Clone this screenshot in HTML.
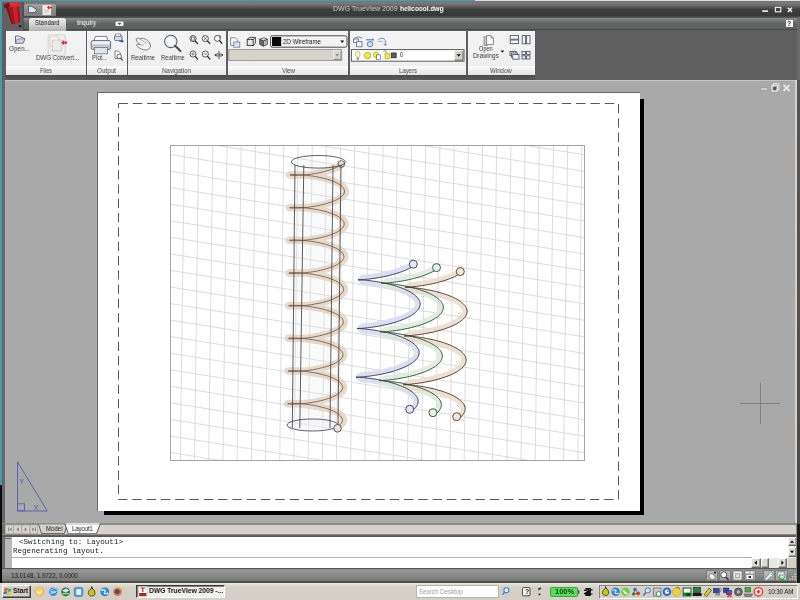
<!DOCTYPE html>
<html lang="en">
<head>
<meta charset="utf-8">
<title>DWG TrueView 2009 helicoool.dwg</title>
<style>
html,body{margin:0;padding:0;}
body{width:800px;height:600px;overflow:hidden;position:relative;background:#a9a9a9;font-family:"Liberation Sans",sans-serif;}
.abs,.b,.t{position:absolute;}
.b{box-sizing:border-box;}
.t{white-space:pre;transform-origin:0 50%;display:block;will-change:transform;}
.panel{top:30.5px;height:44.2px;background:linear-gradient(#f4f4f4,#f0f0f0 70%,#ededed);}
.ptitle{top:65px;height:9.7px;background:linear-gradient(#e0e0e0 0,#fcfcfc 1px,#f4f4f4 40%,#e3e3e3 100%);}
.raised{background:#d4d0c8;border:1px solid;border-color:#fff #404040 #404040 #fff;box-shadow:inset -1px -1px 0 #808080;}
.sunken{border:1px solid;border-color:#808080 #fff #fff #808080;}
.sb{background:#dedbd4;border:1px solid;border-color:#fbfbfb #6c6c6c #6c6c6c #fbfbfb;box-shadow:inset -1px -1px 0 #a4a4a0;}
.sti{top:570px;height:11px;background:linear-gradient(#bcbcbc,#a2a2a2);border:1px solid #7e7e7e;border-radius:1px;}
</style>
</head>
<body>
<!-- ======= drawing window ======= -->
<div class="b" id="mdi" style="left:2px;top:79.5px;width:795px;height:444.5px;background:#a9a9a9;border-top:1.8px solid #c4c4c4;"></div>
<div class="b" style="left:1.7px;top:79.5px;width:3.1px;height:444px;background:#69656d"></div>
<div class="b" style="left:795px;top:79.5px;width:1.5px;height:444px;background:#d2d2d2"></div>
<div class="b" style="left:796.5px;top:79.5px;width:3.5px;height:444px;background:linear-gradient(#555,#5a5048 50%,#4a4a4a)"></div>
<!-- paper -->
<div class="b" style="left:104px;top:99px;width:539.5px;height:415.5px;background:#000"></div>
<div class="b" id="paper" style="left:97px;top:92px;width:542.5px;height:418.5px;background:#fff;border-left:1px solid #6a6a6a;border-top:1px solid #6a6a6a"></div>
<svg class="abs" style="left:0;top:0" width="800" height="600" viewBox="0 0 800 600">
<clipPath id="vp"><rect x="170.5" y="145.5" width="414.0" height="315.0"/></clipPath>
<g clip-path="url(#vp)" stroke="#d8d8da" stroke-width="0.9" fill="none">
<line x1="170.5" y1="71.8" x2="584.5" y2="138.3"/>
<line x1="170.5" y1="88.4" x2="584.5" y2="154.8"/>
<line x1="170.5" y1="104.9" x2="584.5" y2="171.4"/>
<line x1="170.5" y1="121.5" x2="584.5" y2="187.9"/>
<line x1="170.5" y1="138.0" x2="584.5" y2="204.5"/>
<line x1="170.5" y1="154.6" x2="584.5" y2="221.0"/>
<line x1="170.5" y1="171.2" x2="584.5" y2="237.6"/>
<line x1="170.5" y1="187.7" x2="584.5" y2="254.1"/>
<line x1="170.5" y1="204.2" x2="584.5" y2="270.7"/>
<line x1="170.5" y1="220.8" x2="584.5" y2="287.2"/>
<line x1="170.5" y1="237.3" x2="584.5" y2="303.8"/>
<line x1="170.5" y1="253.9" x2="584.5" y2="320.3"/>
<line x1="170.5" y1="270.4" x2="584.5" y2="336.9"/>
<line x1="170.5" y1="287.0" x2="584.5" y2="353.4"/>
<line x1="170.5" y1="303.6" x2="584.5" y2="370.0"/>
<line x1="170.5" y1="320.1" x2="584.5" y2="386.5"/>
<line x1="170.5" y1="336.6" x2="584.5" y2="403.1"/>
<line x1="170.5" y1="353.2" x2="584.5" y2="419.6"/>
<line x1="170.5" y1="369.8" x2="584.5" y2="436.2"/>
<line x1="170.5" y1="386.3" x2="584.5" y2="452.7"/>
<line x1="170.5" y1="402.9" x2="584.5" y2="469.3"/>
<line x1="170.5" y1="419.4" x2="584.5" y2="485.8"/>
<line x1="170.5" y1="436.0" x2="584.5" y2="502.4"/>
<line x1="170.5" y1="452.5" x2="584.5" y2="518.9"/>
<line x1="170.5" y1="469.0" x2="584.5" y2="535.5"/>
<line x1="184.4" y1="145.5" x2="180.3" y2="460.5"/>
<line x1="198.6" y1="145.5" x2="194.5" y2="460.5"/>
<line x1="212.8" y1="145.5" x2="208.7" y2="460.5"/>
<line x1="227.0" y1="145.5" x2="222.9" y2="460.5"/>
<line x1="241.2" y1="145.5" x2="237.1" y2="460.5"/>
<line x1="255.4" y1="145.5" x2="251.3" y2="460.5"/>
<line x1="269.6" y1="145.5" x2="265.5" y2="460.5"/>
<line x1="283.8" y1="145.5" x2="279.7" y2="460.5"/>
<line x1="298.0" y1="145.5" x2="293.9" y2="460.5"/>
<line x1="312.2" y1="145.5" x2="308.1" y2="460.5"/>
<line x1="326.3" y1="145.5" x2="322.3" y2="460.5"/>
<line x1="340.5" y1="145.5" x2="336.4" y2="460.5"/>
<line x1="354.7" y1="145.5" x2="350.6" y2="460.5"/>
<line x1="368.9" y1="145.5" x2="364.8" y2="460.5"/>
<line x1="383.1" y1="145.5" x2="379.0" y2="460.5"/>
<line x1="397.3" y1="145.5" x2="393.2" y2="460.5"/>
<line x1="411.5" y1="145.5" x2="407.4" y2="460.5"/>
<line x1="425.7" y1="145.5" x2="421.6" y2="460.5"/>
<line x1="439.9" y1="145.5" x2="435.8" y2="460.5"/>
<line x1="454.1" y1="145.5" x2="450.0" y2="460.5"/>
<line x1="468.3" y1="145.5" x2="464.2" y2="460.5"/>
<line x1="482.5" y1="145.5" x2="478.4" y2="460.5"/>
<line x1="496.7" y1="145.5" x2="492.6" y2="460.5"/>
<line x1="510.9" y1="145.5" x2="506.8" y2="460.5"/>
<line x1="525.1" y1="145.5" x2="521.0" y2="460.5"/>
<line x1="539.3" y1="145.5" x2="535.2" y2="460.5"/>
<line x1="553.5" y1="145.5" x2="549.4" y2="460.5"/>
<line x1="567.7" y1="145.5" x2="563.6" y2="460.5"/>
<line x1="581.9" y1="145.5" x2="577.8" y2="460.5"/>
<line x1="596.1" y1="145.5" x2="592.0" y2="460.5"/>
</g>
<rect x="170.5" y="145.5" width="414.0" height="315.0" fill="none" stroke="#a4a4a4" stroke-width="1"/>
<polygon points="292,162 345,162 342,425 288,425" fill="#e6e8ee" opacity="0.22"/>
<path d="M340.5,165.6 L338.8,166.6 L336.9,167.5 L334.8,168.4 L332.5,169.3 L330.1,170.1 L327.6,170.8 L325.0,171.5 L322.3,172.2 L319.6,172.7 L316.9,173.3 L314.2,173.7 L311.5,174.1 L308.8,174.5 L306.3,174.7 L303.9,175.0 L301.5,175.2 L299.4,175.3 L297.4,175.4 L295.6,175.4 L294.0,175.4 L292.6,175.4 L291.5,175.4 L290.6,175.3 L289.9,175.2 L289.5,175.1 L289.4,175.0 L289.5,174.9 L289.9,174.8 L290.6,174.7 L291.5,174.6 L292.7,174.6 L294.1,174.6 L295.7,174.6 L297.5,174.6 L299.5,174.7 L301.7,174.9 L304.0,175.0 L306.5,175.3 L309.0,175.6 L311.6,175.9 L314.3,176.3 L317.0,176.8 L319.8,177.3 L322.5,177.9 L325.1,178.5 L327.7,179.2 L330.2,180.0 L332.6,180.8 L334.8,181.6 L336.9,182.5 L338.7,183.5 L340.4,184.4 L341.9,185.4 L343.1,186.5 L344.1,187.6 L344.9,188.7 L345.4,189.8 L345.6,190.9 L345.6,192.0 L345.3,193.1 L344.7,194.2 L343.9,195.3 L342.9,196.3 L341.6,197.4 L340.1,198.4 L338.3,199.4 L336.4,200.3 L334.3,201.2 L332.0,202.0 L329.6,202.8 L327.1,203.6 L324.5,204.3 L321.8,204.9 L319.1,205.5 L316.4,206.0 L313.6,206.4 L311.0,206.8 L308.3,207.2 L305.8,207.4 L303.3,207.7 L301.0,207.9 L298.9,208.0 L296.9,208.1 L295.1,208.1 L293.5,208.1 L292.2,208.1 L291.1,208.0 L290.2,208.0 L289.6,207.9 L289.2,207.8 L289.1,207.7 L289.3,207.6 L289.7,207.5 L290.4,207.4 L291.3,207.3 L292.5,207.3 L293.9,207.2 L295.5,207.3 L297.4,207.3 L299.4,207.4 L301.6,207.5 L303.9,207.7 L306.3,208.0 L308.9,208.3 L311.5,208.6 L314.2,209.0 L317.0,209.5 L319.7,210.0 L322.4,210.6 L325.0,211.2 L327.6,211.9 L330.1,212.7 L332.4,213.5 L334.7,214.4 L336.7,215.3 L338.6,216.2 L340.2,217.2 L341.7,218.2 L342.9,219.3 L343.9,220.3 L344.6,221.4 L345.1,222.5 L345.3,223.6 L345.3,224.7 L345.0,225.9 L344.4,227.0 L343.6,228.0 L342.5,229.1 L341.2,230.1 L339.6,231.2 L337.9,232.1 L335.9,233.1 L333.8,233.9 L331.5,234.8 L329.1,235.6 L326.6,236.3 L324.0,237.0 L321.3,237.6 L318.6,238.2 L315.8,238.7 L313.1,239.1 L310.4,239.5 L307.8,239.9 L305.3,240.1 L302.8,240.4 L300.6,240.5 L298.4,240.7 L296.4,240.8 L294.7,240.8 L293.1,240.8 L291.8,240.8 L290.7,240.7 L289.8,240.6 L289.2,240.5 L288.9,240.4 L288.8,240.3 L289.0,240.2 L289.4,240.1 L290.1,240.1 L291.1,240.0 L292.3,239.9 L293.7,239.9 L295.3,239.9 L297.2,240.0 L299.2,240.1 L301.4,240.2 L303.8,240.4 L306.2,240.7 L308.8,241.0 L311.5,241.3 L314.1,241.7 L316.9,242.2 L319.6,242.7 L322.3,243.3 L324.9,244.0 L327.5,244.7 L330.0,245.4 L332.3,246.3 L334.5,247.1 L336.6,248.0 L338.4,249.0 L340.1,250.0 L341.5,251.0 L342.7,252.0 L343.7,253.1 L344.4,254.2 L344.8,255.3 L345.0,256.4 L344.9,257.5 L344.6,258.6 L344.0,259.7 L343.2,260.8 L342.1,261.9 L340.7,262.9 L339.2,263.9 L337.4,264.9 L335.4,265.8 L333.3,266.7 L331.0,267.5 L328.6,268.3 L326.1,269.1 L323.4,269.7 L320.8,270.4 L318.0,270.9 L315.3,271.4 L312.6,271.9 L309.9,272.2 L307.3,272.6 L304.8,272.8 L302.3,273.1 L300.1,273.2 L297.9,273.4 L296.0,273.4 L294.2,273.5 L292.7,273.5 L291.4,273.4 L290.3,273.4 L289.4,273.3 L288.9,273.2 L288.5,273.1 L288.5,273.0 L288.7,272.9 L289.2,272.8 L289.9,272.7 L290.9,272.7 L292.1,272.6 L293.5,272.6 L295.2,272.6 L297.0,272.7 L299.1,272.8 L301.3,272.9 L303.7,273.1 L306.1,273.4 L308.7,273.7 L311.4,274.0 L314.1,274.5 L316.8,274.9 L319.5,275.5 L322.2,276.1 L324.8,276.7 L327.4,277.4 L329.9,278.2 L332.2,279.0 L334.4,279.9 L336.4,280.8 L338.2,281.7 L339.9,282.7 L341.3,283.7 L342.5,284.8 L343.4,285.9 L344.1,287.0 L344.5,288.1 L344.7,289.2 L344.6,290.3 L344.3,291.4 L343.6,292.5 L342.8,293.6 L341.7,294.6 L340.3,295.7 L338.7,296.7 L336.9,297.6 L335.0,298.6 L332.8,299.4 L330.5,300.3 L328.1,301.1 L325.5,301.8 L322.9,302.5 L320.2,303.1 L317.5,303.6 L314.8,304.1 L312.1,304.6 L309.4,305.0 L306.8,305.3 L304.2,305.5 L301.8,305.8 L299.6,305.9 L297.5,306.0 L295.5,306.1 L293.8,306.2 L292.3,306.2 L291.0,306.1 L289.9,306.1 L289.1,306.0 L288.5,305.9 L288.2,305.8 L288.2,305.7 L288.4,305.6 L288.9,305.5 L289.6,305.4 L290.6,305.3 L291.9,305.3 L293.3,305.3 L295.0,305.3 L296.9,305.4 L299.0,305.5 L301.2,305.6 L303.5,305.8 L306.0,306.1 L308.6,306.4 L311.3,306.8 L314.0,307.2 L316.7,307.7 L319.4,308.2 L322.1,308.8 L324.7,309.5 L327.3,310.2 L329.7,310.9 L332.1,311.8 L334.2,312.6 L336.2,313.5 L338.1,314.5 L339.7,315.5 L341.1,316.5 L342.3,317.6 L343.2,318.6 L343.8,319.7 L344.3,320.8 L344.4,321.9 L344.3,323.1 L343.9,324.2 L343.3,325.3 L342.4,326.3 L341.2,327.4 L339.9,328.4 L338.3,329.4 L336.5,330.4 L334.5,331.3 L332.3,332.2 L330.0,333.0 L327.6,333.8 L325.0,334.5 L322.4,335.2 L319.7,335.8 L317.0,336.4 L314.2,336.9 L311.5,337.3 L308.9,337.7 L306.2,338.0 L303.7,338.2 L301.3,338.5 L299.1,338.6 L297.0,338.7 L295.1,338.8 L293.3,338.8 L291.8,338.8 L290.5,338.8 L289.5,338.7 L288.7,338.7 L288.2,338.6 L287.9,338.5 L287.9,338.4 L288.1,338.2 L288.6,338.2 L289.4,338.1 L290.4,338.0 L291.7,338.0 L293.2,338.0 L294.8,338.0 L296.7,338.1 L298.8,338.2 L301.1,338.3 L303.4,338.5 L305.9,338.8 L308.5,339.1 L311.2,339.5 L313.9,339.9 L316.6,340.4 L319.3,340.9 L322.0,341.5 L324.6,342.2 L327.2,342.9 L329.6,343.7 L331.9,344.5 L334.1,345.4 L336.1,346.3 L337.9,347.2 L339.5,348.2 L340.9,349.3 L342.0,350.3 L342.9,351.4 L343.6,352.5 L344.0,353.6 L344.1,354.7 L344.0,355.8 L343.6,356.9 L342.9,358.0 L342.0,359.1 L340.8,360.2 L339.4,361.2 L337.8,362.2 L336.0,363.2 L334.0,364.1 L331.8,364.9 L329.5,365.8 L327.1,366.5 L324.5,367.3 L321.9,367.9 L319.2,368.5 L316.4,369.1 L313.7,369.6 L311.0,370.0 L308.3,370.4 L305.7,370.7 L303.2,370.9 L300.8,371.2 L298.6,371.3 L296.5,371.4 L294.6,371.5 L292.9,371.5 L291.4,371.5 L290.1,371.5 L289.1,371.4 L288.3,371.3 L287.8,371.2 L287.6,371.1 L287.6,371.0 L287.8,370.9 L288.4,370.8 L289.2,370.7 L290.2,370.7 L291.5,370.7 L293.0,370.6 L294.7,370.7 L296.6,370.7 L298.7,370.9 L300.9,371.0 L303.3,371.2 L305.8,371.5 L308.4,371.8 L311.1,372.2 L313.8,372.6 L316.5,373.1 L319.2,373.6 L321.9,374.3 L324.5,374.9 L327.1,375.6 L329.5,376.4 L331.8,377.2 L334.0,378.1 L335.9,379.0 L337.7,380.0 L339.3,381.0 L340.7,382.0 L341.8,383.1 L342.7,384.2 L343.3,385.3 L343.7,386.4 L343.8,387.5 L343.6,388.6 L343.2,389.7 L342.5,390.8 L341.6,391.9 L340.4,392.9 L339.0,394.0 L337.4,395.0 L335.5,395.9 L333.5,396.8 L331.3,397.7 L329.0,398.5 L326.5,399.3 L324.0,400.0 L321.3,400.7 L318.6,401.3 L315.9,401.8 L313.2,402.3 L310.5,402.7 L307.8,403.1 L305.2,403.4 L302.7,403.6 L300.3,403.8 L298.1,404.0 L296.0,404.1 L294.2,404.2 L292.5,404.2 L291.0,404.2 L289.7,404.1 L288.7,404.1 L288.0,404.0 L287.5,403.9 L287.2,403.8 L287.3,403.7 L287.6,403.6 L288.1,403.5 L288.9,403.4 L290.0,403.4 L291.3,403.3 L292.8,403.3 L294.5,403.4 L296.4,403.4 L298.6,403.5 L300.8,403.7 L303.2,403.9 L305.7,404.2 L308.3,404.5 L311.0,404.9 L313.7,405.3 L316.4,405.8 L319.1,406.4 L321.8,407.0 L324.4,407.7 L327.0,408.4 L329.4,409.2 L331.7,410.0 L333.8,410.9 L335.8,411.8 L337.6,412.8 L339.1,413.8 L340.5,414.8 L341.6,415.9 L342.4,416.9 L343.0,418.0 L343.4,419.1 L343.5,420.3 L343.3,421.4 L342.8,422.5 L342.1,423.6 L341.2,424.6 L340.0,425.7 L338.6,426.7 L336.9,427.7" fill="none" stroke="#e3d5c6" stroke-width="7" stroke-linecap="round" stroke-linejoin="round" opacity="0.88"/>
<path d="M339.5,165.6 L337.9,166.6 L336.0,167.5 L334.0,168.4 L331.8,169.3 L329.4,170.1 L327.0,170.8 L324.5,171.5 L321.9,172.2 L319.2,172.7 L316.6,173.3 L313.9,173.7 L311.3,174.1 L308.7,174.5 L306.2,174.7 L303.9,175.0 L301.6,175.2 L299.5,175.3 L297.6,175.4 L295.8,175.4 L294.2,175.4 L292.9,175.4 L291.8,175.4 L290.9,175.3 L290.3,175.2 L289.9,175.1 L289.8,175.0 L289.9,174.9 L290.3,174.8 L291.0,174.7 L291.9,174.6 L293.0,174.6 L294.4,174.6 L295.9,174.6 L297.7,174.6 L299.6,174.7 L301.8,174.9 L304.0,175.0 L306.4,175.3 L308.9,175.6 L311.4,175.9 L314.1,176.3 L316.7,176.8 L319.4,177.3 L322.0,177.9 L324.6,178.5 L327.1,179.2 L329.5,180.0 L331.8,180.8 L334.0,181.6 L336.0,182.5 L337.8,183.5 L339.5,184.4 L340.9,185.4 L342.1,186.5 L343.1,187.6 L343.8,188.7 L344.3,189.8 L344.5,190.9 L344.5,192.0 L344.2,193.1 L343.7,194.2 L342.9,195.3 L341.9,196.3 L340.6,197.4 L339.1,198.4 L337.4,199.4 L335.5,200.3 L333.5,201.2 L331.3,202.0 L328.9,202.8 L326.5,203.6 L324.0,204.3 L321.3,204.9 L318.7,205.5 L316.0,206.0 L313.4,206.4 L310.8,206.8 L308.2,207.2 L305.7,207.4 L303.4,207.7 L301.1,207.9 L299.0,208.0 L297.1,208.1 L295.4,208.1 L293.8,208.1 L292.5,208.1 L291.4,208.0 L290.6,208.0 L289.9,207.9 L289.6,207.8 L289.5,207.7 L289.6,207.6 L290.1,207.5 L290.7,207.4 L291.6,207.3 L292.8,207.3 L294.2,207.2 L295.7,207.3 L297.5,207.3 L299.5,207.4 L301.6,207.5 L303.9,207.7 L306.3,208.0 L308.8,208.3 L311.3,208.6 L314.0,209.0 L316.6,209.5 L319.3,210.0 L321.9,210.6 L324.5,211.2 L327.0,211.9 L329.4,212.7 L331.7,213.5 L333.8,214.4 L335.8,215.3 L337.7,216.2 L339.3,217.2 L340.7,218.2 L341.9,219.3 L342.8,220.3 L343.6,221.4 L344.0,222.5 L344.2,223.6 L344.2,224.7 L343.9,225.9 L343.3,227.0 L342.5,228.0 L341.4,229.1 L340.2,230.1 L338.7,231.2 L337.0,232.1 L335.1,233.1 L333.0,233.9 L330.8,234.8 L328.4,235.6 L326.0,236.3 L323.4,237.0 L320.8,237.6 L318.2,238.2 L315.5,238.7 L312.9,239.1 L310.3,239.5 L307.7,239.9 L305.2,240.1 L302.9,240.4 L300.6,240.5 L298.6,240.7 L296.6,240.8 L294.9,240.8 L293.4,240.8 L292.1,240.8 L291.0,240.7 L290.2,240.6 L289.6,240.5 L289.3,240.4 L289.2,240.3 L289.4,240.2 L289.8,240.1 L290.5,240.1 L291.4,240.0 L292.6,239.9 L294.0,239.9 L295.6,239.9 L297.4,240.0 L299.4,240.1 L301.5,240.2 L303.8,240.4 L306.2,240.7 L308.7,241.0 L311.2,241.3 L313.9,241.7 L316.5,242.2 L319.2,242.7 L321.8,243.3 L324.4,244.0 L326.9,244.7 L329.3,245.4 L331.6,246.3 L333.7,247.1 L335.7,248.0 L337.5,249.0 L339.1,250.0 L340.5,251.0 L341.7,252.0 L342.6,253.1 L343.3,254.2 L343.7,255.3 L343.9,256.4 L343.8,257.5 L343.5,258.6 L342.9,259.7 L342.1,260.8 L341.0,261.9 L339.7,262.9 L338.2,263.9 L336.5,264.9 L334.6,265.8 L332.5,266.7 L330.3,267.5 L327.9,268.3 L325.5,269.1 L322.9,269.7 L320.3,270.4 L317.7,270.9 L315.0,271.4 L312.3,271.9 L309.7,272.2 L307.2,272.6 L304.7,272.8 L302.4,273.1 L300.2,273.2 L298.1,273.4 L296.2,273.4 L294.5,273.5 L293.0,273.5 L291.7,273.4 L290.6,273.4 L289.8,273.3 L289.2,273.2 L288.9,273.1 L288.9,273.0 L289.1,272.9 L289.5,272.8 L290.2,272.7 L291.2,272.7 L292.4,272.6 L293.8,272.6 L295.4,272.6 L297.2,272.7 L299.2,272.8 L301.4,272.9 L303.7,273.1 L306.1,273.4 L308.6,273.7 L311.1,274.0 L313.8,274.5 L316.4,274.9 L319.1,275.5 L321.7,276.1 L324.3,276.7 L326.8,277.4 L329.1,278.2 L331.4,279.0 L333.6,279.9 L335.5,280.8 L337.3,281.7 L338.9,282.7 L340.3,283.7 L341.4,284.8 L342.4,285.9 L343.0,287.0 L343.4,288.1 L343.6,289.2 L343.5,290.3 L343.2,291.4 L342.6,292.5 L341.7,293.6 L340.6,294.6 L339.3,295.7 L337.8,296.7 L336.0,297.6 L334.1,298.6 L332.0,299.4 L329.8,300.3 L327.4,301.1 L324.9,301.8 L322.4,302.5 L319.8,303.1 L317.1,303.6 L314.5,304.1 L311.8,304.6 L309.2,305.0 L306.7,305.3 L304.2,305.5 L301.9,305.8 L299.7,305.9 L297.6,306.0 L295.7,306.1 L294.0,306.2 L292.5,306.2 L291.3,306.1 L290.2,306.1 L289.4,306.0 L288.9,305.9 L288.6,305.8 L288.6,305.7 L288.8,305.6 L289.3,305.5 L290.0,305.4 L291.0,305.3 L292.2,305.3 L293.6,305.3 L295.2,305.3 L297.1,305.4 L299.1,305.5 L301.2,305.6 L303.5,305.8 L306.0,306.1 L308.5,306.4 L311.1,306.8 L313.7,307.2 L316.3,307.7 L319.0,308.2 L321.6,308.8 L324.2,309.5 L326.6,310.2 L329.0,310.9 L331.3,311.8 L333.4,312.6 L335.4,313.5 L337.1,314.5 L338.7,315.5 L340.1,316.5 L341.2,317.6 L342.1,318.6 L342.8,319.7 L343.2,320.8 L343.3,321.9 L343.2,323.1 L342.8,324.2 L342.2,325.3 L341.3,326.3 L340.2,327.4 L338.9,328.4 L337.3,329.4 L335.6,330.4 L333.7,331.3 L331.5,332.2 L329.3,333.0 L326.9,333.8 L324.4,334.5 L321.9,335.2 L319.3,335.8 L316.6,336.4 L313.9,336.9 L311.3,337.3 L308.7,337.7 L306.2,338.0 L303.7,338.2 L301.4,338.5 L299.2,338.6 L297.1,338.7 L295.3,338.8 L293.6,338.8 L292.1,338.8 L290.9,338.8 L289.9,338.7 L289.1,338.7 L288.6,338.6 L288.3,338.5 L288.3,338.4 L288.5,338.2 L289.0,338.2 L289.8,338.1 L290.7,338.0 L292.0,338.0 L293.4,338.0 L295.1,338.0 L296.9,338.1 L298.9,338.2 L301.1,338.3 L303.4,338.5 L305.8,338.8 L308.4,339.1 L311.0,339.5 L313.6,339.9 L316.2,340.4 L318.9,340.9 L321.5,341.5 L324.0,342.2 L326.5,342.9 L328.9,343.7 L331.2,344.5 L333.3,345.4 L335.2,346.3 L337.0,347.2 L338.5,348.2 L339.9,349.3 L341.0,350.3 L341.9,351.4 L342.5,352.5 L342.9,353.6 L343.0,354.7 L342.9,355.8 L342.5,356.9 L341.8,358.0 L340.9,359.1 L339.8,360.2 L338.5,361.2 L336.9,362.2 L335.1,363.2 L333.2,364.1 L331.1,364.9 L328.8,365.8 L326.4,366.5 L323.9,367.3 L321.4,367.9 L318.7,368.5 L316.1,369.1 L313.4,369.6 L310.8,370.0 L308.2,370.4 L305.6,370.7 L303.2,370.9 L300.9,371.2 L298.7,371.3 L296.7,371.4 L294.8,371.5 L293.2,371.5 L291.7,371.5 L290.5,371.5 L289.5,371.4 L288.7,371.3 L288.2,371.2 L288.0,371.1 L288.0,371.0 L288.2,370.9 L288.8,370.8 L289.5,370.7 L290.5,370.7 L291.8,370.7 L293.2,370.6 L294.9,370.7 L296.8,370.7 L298.8,370.9 L301.0,371.0 L303.3,371.2 L305.7,371.5 L308.3,371.8 L310.9,372.2 L313.5,372.6 L316.1,373.1 L318.8,373.6 L321.4,374.3 L323.9,374.9 L326.4,375.6 L328.8,376.4 L331.0,377.2 L333.1,378.1 L335.0,379.0 L336.8,380.0 L338.3,381.0 L339.7,382.0 L340.8,383.1 L341.6,384.2 L342.2,385.3 L342.6,386.4 L342.7,387.5 L342.5,388.6 L342.1,389.7 L341.5,390.8 L340.5,391.9 L339.4,392.9 L338.0,394.0 L336.4,395.0 L334.7,395.9 L332.7,396.8 L330.6,397.7 L328.3,398.5 L325.9,399.3 L323.4,400.0 L320.8,400.7 L318.2,401.3 L315.5,401.8 L312.9,402.3 L310.2,402.7 L307.7,403.1 L305.1,403.4 L302.7,403.6 L300.4,403.8 L298.2,404.0 L296.2,404.1 L294.4,404.2 L292.7,404.2 L291.3,404.2 L290.1,404.1 L289.1,404.1 L288.4,404.0 L287.9,403.9 L287.6,403.8 L287.7,403.7 L288.0,403.6 L288.5,403.5 L289.3,403.4 L290.3,403.4 L291.6,403.3 L293.0,403.3 L294.7,403.4 L296.6,403.4 L298.7,403.5 L300.9,403.7 L303.2,403.9 L305.6,404.2 L308.2,404.5 L310.8,404.9 L313.4,405.3 L316.0,405.8 L318.7,406.4 L321.3,407.0 L323.8,407.7 L326.3,408.4 L328.7,409.2 L330.9,410.0 L333.0,410.9 L334.9,411.8 L336.6,412.8 L338.1,413.8 L339.4,414.8 L340.5,415.9 L341.4,416.9 L341.9,418.0 L342.3,419.1 L342.4,420.3 L342.2,421.4 L341.8,422.5 L341.1,423.6 L340.2,424.6 L339.0,425.7 L337.6,426.7 L336.0,427.7" fill="none" stroke="#604e3e" stroke-width="0.85" opacity="0.9"/>
<g fill="none" stroke="#484242" stroke-width="0.85">
<ellipse cx="318.3" cy="161.8" rx="27" ry="6.3"/>
<ellipse cx="312.5" cy="425" rx="25.5" ry="6" fill="#eef0f6" fill-opacity="0.5"/>
<line x1="295" y1="165" x2="292.3" y2="428"/>
<line x1="303.8" y1="165" x2="299.8" y2="428"/>
<line x1="333" y1="165" x2="330" y2="428"/>
<line x1="341" y1="165" x2="338" y2="428"/>
<circle cx="341.3" cy="164" r="3.3"/>
<circle cx="337.5" cy="428.3" r="3.8" fill="#e8e4e0"/>
</g>
<path d="M412.7,266.4 L411.1,267.4 L409.4,268.3 L407.6,269.2 L405.6,270.1 L403.6,270.9 L401.6,271.7 L399.4,272.5 L397.2,273.2 L395.0,273.9 L392.7,274.5 L390.5,275.1 L388.2,275.7 L385.9,276.2 L383.7,276.7 L381.4,277.1 L379.3,277.5 L377.1,277.9 L375.1,278.2 L373.1,278.5 L371.2,278.7 L369.4,279.0 L367.7,279.1 L366.1,279.3 L364.6,279.4 L363.3,279.5 L362.1,279.6 L361.0,279.7 L360.1,279.7 L359.4,279.8 L358.8,279.8 L358.4,279.8 L358.1,279.8 L358.0,279.8 L358.1,279.8 L358.3,279.8 L358.7,279.8 L359.2,279.8 L359.9,279.9 L360.8,279.9 L361.8,280.0 L363.0,280.0 L364.3,280.1 L365.7,280.3 L367.2,280.4 L368.9,280.6 L370.7,280.8 L372.5,281.1 L374.5,281.3 L376.5,281.6 L378.6,282.0 L380.8,282.4 L383.0,282.8 L385.2,283.3 L387.5,283.8 L389.7,284.4 L392.0,284.9 L394.2,285.6 L396.4,286.3 L398.6,287.0 L400.7,287.7 L402.8,288.5 L404.8,289.3 L406.7,290.2 L408.5,291.1 L410.2,292.0 L411.8,293.0 L413.3,294.0 L414.6,295.0 L415.8,296.0 L416.9,297.1 L417.8,298.1 L418.6,299.2 L419.2,300.3 L419.7,301.4 L420.0,302.6 L420.1,303.7 L420.1,304.8 L419.9,305.9 L419.5,307.0 L419.0,308.2 L418.3,309.3 L417.5,310.3 L416.5,311.4 L415.3,312.5 L414.1,313.5 L412.6,314.5 L411.1,315.5 L409.5,316.4 L407.7,317.4 L405.8,318.2 L403.9,319.1 L401.8,319.9 L399.7,320.7 L397.6,321.5 L395.4,322.2 L393.1,322.8 L390.9,323.5 L388.6,324.0 L386.3,324.6 L384.0,325.1 L381.8,325.5 L379.6,326.0 L377.4,326.4 L375.3,326.7 L373.3,327.0 L371.3,327.3 L369.5,327.5 L367.7,327.7 L366.0,327.9 L364.5,328.1 L363.1,328.2 L361.8,328.3 L360.7,328.4 L359.7,328.4 L358.8,328.4 L358.2,328.5 L357.6,328.5 L357.3,328.5 L357.1,328.5 L357.0,328.5 L357.2,328.5 L357.5,328.5 L357.9,328.5 L358.5,328.5 L359.3,328.6 L360.2,328.6 L361.3,328.7 L362.5,328.8 L363.9,328.9 L365.3,329.0 L366.9,329.2 L368.6,329.4 L370.5,329.6 L372.4,329.9 L374.3,330.2 L376.4,330.5 L378.5,330.9 L380.7,331.3 L382.9,331.7 L385.2,332.2 L387.4,332.7 L389.7,333.3 L391.9,333.9 L394.2,334.5 L396.4,335.2 L398.5,336.0 L400.6,336.7 L402.6,337.5 L404.6,338.4 L406.5,339.3 L408.2,340.2 L409.9,341.1 L411.4,342.1 L412.9,343.1 L414.2,344.1 L415.3,345.1 L416.3,346.2 L417.2,347.3 L417.9,348.4 L418.5,349.5 L418.9,350.6 L419.1,351.7 L419.1,352.8 L419.0,354.0 L418.8,355.1 L418.3,356.2 L417.8,357.3 L417.0,358.4 L416.1,359.5 L415.0,360.5 L413.9,361.6 L412.5,362.6 L411.1,363.6 L409.5,364.6 L407.8,365.5 L406.0,366.4 L404.1,367.3 L402.1,368.1 L400.0,368.9 L397.9,369.7 L395.7,370.4 L393.5,371.1 L391.2,371.8 L389.0,372.4 L386.7,373.0 L384.4,373.5 L382.1,374.0 L379.9,374.4 L377.7,374.8 L375.6,375.2 L373.5,375.5 L371.5,375.8 L369.6,376.1 L367.7,376.3 L366.0,376.5 L364.4,376.7 L362.9,376.8 L361.6,376.9 L360.4,377.0 L359.3,377.1 L358.3,377.1 L357.6,377.2 L357.0,377.2 L356.5,377.2 L356.2,377.2 L356.1,377.2 L356.1,377.2 L356.3,377.2 L356.6,377.2 L357.2,377.2 L357.8,377.3 L358.7,377.3 L359.7,377.3 L360.8,377.4 L362.1,377.5 L363.5,377.6 L365.0,377.8 L366.6,378.0 L368.4,378.2 L370.2,378.4 L372.2,378.7 L374.2,379.0 L376.3,379.3 L378.4,379.7 L380.6,380.1 L382.8,380.6 L385.1,381.1 L387.4,381.6 L389.6,382.2 L391.9,382.9 L394.1,383.5 L396.3,384.2 L398.4,385.0 L400.5,385.8 L402.5,386.6 L404.4,387.4 L406.2,388.3 L407.9,389.2 L409.6,390.2 L411.1,391.2 L412.4,392.2 L413.7,393.2 L414.8,394.3 L415.7,395.3 L416.5,396.4 L417.2,397.5 L417.7,398.6 L418.0,399.7 L418.1,400.9 L418.1,402.0 L418.0,403.1 L417.6,404.2 L417.1,405.3 L416.5,406.4 L415.7,407.5 L414.7,408.6 L413.6,409.7 L412.4,410.7 L411.0,411.7 L409.5,412.7 L407.1,409.0 L408.5,408.1 L409.7,407.2 L410.7,406.4 L411.6,405.5 L412.3,404.7 L412.8,404.0 L413.2,403.3 L413.5,402.7 L413.7,402.2 L413.8,401.7 L413.8,401.2 L413.7,400.7 L413.5,400.1 L413.3,399.5 L412.9,398.8 L412.3,398.1 L411.6,397.3 L410.8,396.5 L409.7,395.6 L408.6,394.8 L407.3,393.9 L405.8,393.1 L404.2,392.2 L402.5,391.4 L400.7,390.6 L398.9,389.8 L396.9,389.1 L394.9,388.4 L392.8,387.7 L390.6,387.1 L388.5,386.5 L386.3,385.9 L384.1,385.4 L381.9,384.9 L379.8,384.5 L377.6,384.0 L375.5,383.7 L373.5,383.3 L371.5,383.0 L369.7,382.8 L367.8,382.5 L366.1,382.3 L364.5,382.2 L363.1,382.0 L361.7,381.9 L360.5,381.8 L359.4,381.2 L358.5,380.6 L357.7,380.0 L357.1,379.4 L356.6,378.8 L356.3,378.2 L356.1,377.6 L356.1,377.0 L356.2,376.4 L356.5,375.9 L356.9,375.3 L357.5,374.7 L358.2,374.0 L359.1,373.4 L360.1,372.8 L361.2,372.5 L362.6,372.4 L364.0,372.3 L365.6,372.1 L367.2,371.9 L369.0,371.7 L370.9,371.5 L372.8,371.2 L374.9,370.9 L376.9,370.5 L379.1,370.1 L381.2,369.7 L383.4,369.2 L385.6,368.7 L387.9,368.1 L390.0,367.5 L392.2,366.9 L394.4,366.3 L396.4,365.6 L398.5,364.8 L400.4,364.1 L402.3,363.3 L404.1,362.5 L405.7,361.6 L407.3,360.8 L408.7,359.9 L409.9,359.0 L411.1,358.2 L412.0,357.3 L412.8,356.5 L413.5,355.7 L414.0,355.0 L414.3,354.4 L414.6,353.8 L414.7,353.2 L414.7,352.8 L414.7,352.3 L414.6,351.8 L414.4,351.2 L414.1,350.6 L413.6,349.8 L413.0,349.1 L412.3,348.3 L411.3,347.5 L410.3,346.6 L409.0,345.7 L407.7,344.9 L406.2,344.0 L404.5,343.2 L402.8,342.4 L401.0,341.6 L399.0,340.8 L397.0,340.1 L395.0,339.4 L392.9,338.8 L390.7,338.1 L388.6,337.5 L386.4,337.0 L384.2,336.5 L382.0,336.0 L379.9,335.6 L377.7,335.2 L375.7,334.8 L373.7,334.5 L371.7,334.2 L369.9,334.0 L368.1,333.7 L366.5,333.6 L364.9,333.4 L363.5,333.3 L362.2,333.2 L361.0,332.9 L360.0,332.3 L359.1,331.6 L358.4,331.0 L357.9,330.4 L357.4,329.8 L357.2,329.2 L357.0,328.7 L357.1,328.1 L357.3,327.5 L357.6,326.9 L358.1,326.3 L358.7,325.7 L359.5,325.1 L360.4,324.5 L361.5,323.9 L362.7,323.8 L364.1,323.7 L365.6,323.5 L367.2,323.4 L368.9,323.2 L370.7,322.9 L372.6,322.7 L374.6,322.4 L376.7,322.0 L378.8,321.6 L380.9,321.2 L383.1,320.8 L385.3,320.3 L387.5,319.8 L389.7,319.2 L391.9,318.6 L394.1,318.0 L396.2,317.3 L398.3,316.6 L400.2,315.8 L402.2,315.0 L404.0,314.2 L405.7,313.4 L407.3,312.6 L408.8,311.7 L410.2,310.9 L411.4,310.0 L412.5,309.1 L413.4,308.3 L414.1,307.5 L414.7,306.7 L415.1,306.0 L415.4,305.4 L415.6,304.9 L415.7,304.3 L415.7,303.9 L415.7,303.4 L415.5,302.8 L415.3,302.2 L414.9,301.6 L414.4,300.8 L413.7,300.1 L412.9,299.3 L411.9,298.4 L410.7,297.6 L409.5,296.7 L408.0,295.8 L406.5,295.0 L404.8,294.2 L403.0,293.4 L401.2,292.6 L399.2,291.8 L397.2,291.1 L395.1,290.4 L393.0,289.8 L390.8,289.2 L388.6,288.6 L386.5,288.1 L384.3,287.6 L382.1,287.1 L380.0,286.7 L377.9,286.3 L375.8,286.0 L373.9,285.7 L371.9,285.4 L370.1,285.2 L368.4,285.0 L366.8,284.8 L365.3,284.6 L363.9,284.5 L362.6,284.4 L361.6,283.9 L360.6,283.3 L359.8,282.7 L359.1,282.1 L358.6,281.5 L358.3,280.9 L358.1,280.3 L358.0,279.7 L358.1,279.1 L358.3,278.6 L358.7,278.0 L359.3,277.4 L360.0,276.8 L360.8,276.1 L361.8,275.5 L363.0,275.2 L364.2,275.0 L365.7,274.9 L367.2,274.8 L368.9,274.6 L370.6,274.4 L372.5,274.1 L374.4,273.8 L376.4,273.5 L378.5,273.2 L380.6,272.8 L382.8,272.4 L385.0,271.9 L387.2,271.4 L389.4,270.8 L391.6,270.3 L393.8,269.6 L395.9,269.0 L398.0,268.3 L400.0,267.6 L402.0,266.8 L403.9,266.0 L405.7,265.2 L407.4,264.4 L408.9,263.5 L410.5,262.6 Z" fill="#d8daef" stroke="#d8daef" stroke-width="0.8" stroke-linejoin="round" opacity="0.85"/>
<path d="M435.9,269.8 L434.3,270.8 L432.6,271.7 L430.8,272.6 L428.8,273.5 L426.8,274.3 L424.8,275.1 L422.6,275.9 L420.4,276.6 L418.2,277.3 L415.9,277.9 L413.7,278.5 L411.4,279.1 L409.1,279.6 L406.9,280.1 L404.6,280.5 L402.5,280.9 L400.3,281.3 L398.3,281.6 L396.3,281.9 L394.4,282.1 L392.6,282.4 L390.9,282.5 L389.3,282.7 L387.8,282.8 L386.5,282.9 L385.3,283.0 L384.2,283.1 L383.3,283.1 L382.6,283.2 L382.0,283.2 L381.6,283.2 L381.3,283.2 L381.2,283.2 L381.3,283.2 L381.5,283.2 L381.9,283.2 L382.4,283.2 L383.1,283.3 L384.0,283.3 L385.0,283.4 L386.2,283.4 L387.5,283.5 L388.9,283.7 L390.4,283.8 L392.1,284.0 L393.9,284.2 L395.7,284.5 L397.7,284.7 L399.7,285.0 L401.8,285.4 L404.0,285.8 L406.2,286.2 L408.4,286.7 L410.7,287.2 L412.9,287.8 L415.2,288.3 L417.4,289.0 L419.6,289.7 L421.8,290.4 L423.9,291.1 L426.0,291.9 L428.0,292.7 L429.9,293.6 L431.7,294.5 L433.4,295.4 L435.0,296.4 L436.5,297.4 L437.8,298.4 L439.0,299.4 L440.1,300.5 L441.0,301.5 L441.8,302.6 L442.4,303.7 L442.9,304.8 L443.2,306.0 L443.3,307.1 L443.3,308.2 L443.1,309.3 L442.7,310.4 L442.2,311.6 L441.5,312.7 L440.7,313.7 L439.7,314.8 L438.5,315.9 L437.3,316.9 L435.8,317.9 L434.3,318.9 L432.7,319.8 L430.9,320.8 L429.0,321.6 L427.1,322.5 L425.0,323.3 L422.9,324.1 L420.8,324.9 L418.6,325.6 L416.3,326.2 L414.1,326.9 L411.8,327.4 L409.5,328.0 L407.2,328.5 L405.0,328.9 L402.8,329.4 L400.6,329.8 L398.5,330.1 L396.5,330.4 L394.5,330.7 L392.7,330.9 L390.9,331.1 L389.2,331.3 L387.7,331.5 L386.3,331.6 L385.0,331.7 L383.9,331.8 L382.9,331.8 L382.0,331.8 L381.4,331.9 L380.8,331.9 L380.5,331.9 L380.3,331.9 L380.2,331.9 L380.4,331.9 L380.7,331.9 L381.1,331.9 L381.7,331.9 L382.5,332.0 L383.4,332.0 L384.5,332.1 L385.7,332.2 L387.1,332.3 L388.5,332.4 L390.1,332.6 L391.8,332.8 L393.7,333.0 L395.6,333.3 L397.5,333.6 L399.6,333.9 L401.7,334.3 L403.9,334.7 L406.1,335.1 L408.4,335.6 L410.6,336.1 L412.9,336.7 L415.1,337.3 L417.4,337.9 L419.6,338.6 L421.7,339.4 L423.8,340.1 L425.8,340.9 L427.8,341.8 L429.7,342.7 L431.4,343.6 L433.1,344.5 L434.6,345.5 L436.1,346.5 L437.4,347.5 L438.5,348.5 L439.5,349.6 L440.4,350.7 L441.1,351.8 L441.7,352.9 L442.1,354.0 L442.3,355.1 L442.3,356.2 L442.2,357.4 L442.0,358.5 L441.5,359.6 L441.0,360.7 L440.2,361.8 L439.3,362.9 L438.2,363.9 L437.1,365.0 L435.7,366.0 L434.3,367.0 L432.7,368.0 L431.0,368.9 L429.2,369.8 L427.3,370.7 L425.3,371.5 L423.2,372.3 L421.1,373.1 L418.9,373.8 L416.7,374.5 L414.4,375.2 L412.2,375.8 L409.9,376.4 L407.6,376.9 L405.3,377.4 L403.1,377.8 L400.9,378.2 L398.8,378.6 L396.7,378.9 L394.7,379.2 L392.8,379.5 L390.9,379.7 L389.2,379.9 L387.6,380.1 L386.1,380.2 L384.8,380.3 L383.6,380.4 L382.5,380.5 L381.5,380.5 L380.8,380.6 L380.2,380.6 L379.7,380.6 L379.4,380.6 L379.3,380.6 L379.3,380.6 L379.5,380.6 L379.8,380.6 L380.4,380.6 L381.0,380.7 L381.9,380.7 L382.9,380.7 L384.0,380.8 L385.3,380.9 L386.7,381.0 L388.2,381.2 L389.8,381.4 L391.6,381.6 L393.4,381.8 L395.4,382.1 L397.4,382.4 L399.5,382.7 L401.6,383.1 L403.8,383.5 L406.0,384.0 L408.3,384.5 L410.6,385.0 L412.8,385.6 L415.1,386.3 L417.3,386.9 L419.5,387.6 L421.6,388.4 L423.7,389.2 L425.7,390.0 L427.6,390.8 L429.4,391.7 L431.1,392.6 L432.8,393.6 L434.3,394.6 L435.6,395.6 L436.9,396.6 L438.0,397.7 L438.9,398.7 L439.7,399.8 L440.4,400.9 L440.9,402.0 L441.2,403.1 L441.3,404.3 L441.3,405.4 L441.2,406.5 L440.8,407.6 L440.3,408.7 L439.7,409.8 L438.9,410.9 L437.9,412.0 L436.8,413.1 L435.6,414.1 L434.2,415.1 L432.7,416.1 L430.3,412.4 L431.7,411.5 L432.9,410.6 L433.9,409.8 L434.8,408.9 L435.5,408.1 L436.0,407.4 L436.4,406.7 L436.7,406.1 L436.9,405.6 L437.0,405.1 L437.0,404.6 L436.9,404.1 L436.7,403.5 L436.5,402.9 L436.1,402.2 L435.5,401.5 L434.8,400.7 L434.0,399.9 L432.9,399.0 L431.8,398.2 L430.5,397.3 L429.0,396.5 L427.4,395.6 L425.7,394.8 L423.9,394.0 L422.1,393.2 L420.1,392.5 L418.1,391.8 L416.0,391.1 L413.8,390.5 L411.7,389.9 L409.5,389.3 L407.3,388.8 L405.1,388.3 L403.0,387.9 L400.8,387.4 L398.7,387.1 L396.7,386.7 L394.7,386.4 L392.9,386.2 L391.0,385.9 L389.3,385.7 L387.7,385.6 L386.3,385.4 L384.9,385.3 L383.7,385.2 L382.6,384.6 L381.7,384.0 L380.9,383.4 L380.3,382.8 L379.8,382.2 L379.5,381.6 L379.3,381.0 L379.3,380.4 L379.4,379.8 L379.7,379.3 L380.1,378.7 L380.7,378.1 L381.4,377.4 L382.3,376.8 L383.3,376.2 L384.4,375.9 L385.8,375.8 L387.2,375.7 L388.8,375.5 L390.4,375.3 L392.2,375.1 L394.1,374.9 L396.0,374.6 L398.1,374.3 L400.1,373.9 L402.3,373.5 L404.4,373.1 L406.6,372.6 L408.8,372.1 L411.1,371.5 L413.2,370.9 L415.4,370.3 L417.6,369.7 L419.6,369.0 L421.7,368.2 L423.6,367.5 L425.5,366.7 L427.3,365.9 L428.9,365.0 L430.5,364.2 L431.9,363.3 L433.1,362.4 L434.3,361.6 L435.2,360.7 L436.0,359.9 L436.7,359.1 L437.2,358.4 L437.5,357.8 L437.8,357.2 L437.9,356.6 L437.9,356.2 L437.9,355.7 L437.8,355.2 L437.6,354.6 L437.3,354.0 L436.8,353.2 L436.2,352.5 L435.5,351.7 L434.5,350.9 L433.5,350.0 L432.2,349.1 L430.9,348.3 L429.4,347.4 L427.7,346.6 L426.0,345.8 L424.2,345.0 L422.2,344.2 L420.2,343.5 L418.2,342.8 L416.1,342.2 L413.9,341.5 L411.8,340.9 L409.6,340.4 L407.4,339.9 L405.2,339.4 L403.1,339.0 L400.9,338.6 L398.9,338.2 L396.9,337.9 L394.9,337.6 L393.1,337.4 L391.3,337.1 L389.7,337.0 L388.1,336.8 L386.7,336.7 L385.4,336.6 L384.2,336.3 L383.2,335.7 L382.3,335.0 L381.6,334.4 L381.1,333.8 L380.6,333.2 L380.4,332.6 L380.2,332.1 L380.3,331.5 L380.5,330.9 L380.8,330.3 L381.3,329.7 L381.9,329.1 L382.7,328.5 L383.6,327.9 L384.7,327.3 L385.9,327.2 L387.3,327.1 L388.8,326.9 L390.4,326.8 L392.1,326.6 L393.9,326.3 L395.8,326.1 L397.8,325.8 L399.9,325.4 L402.0,325.0 L404.1,324.6 L406.3,324.2 L408.5,323.7 L410.7,323.2 L412.9,322.6 L415.1,322.0 L417.3,321.4 L419.4,320.7 L421.5,320.0 L423.4,319.2 L425.4,318.4 L427.2,317.6 L428.9,316.8 L430.5,316.0 L432.0,315.1 L433.4,314.3 L434.6,313.4 L435.7,312.5 L436.6,311.7 L437.3,310.9 L437.9,310.1 L438.3,309.4 L438.6,308.8 L438.8,308.3 L438.9,307.7 L438.9,307.3 L438.9,306.8 L438.7,306.2 L438.5,305.6 L438.1,305.0 L437.6,304.2 L436.9,303.5 L436.1,302.7 L435.1,301.8 L433.9,301.0 L432.7,300.1 L431.2,299.2 L429.7,298.4 L428.0,297.6 L426.2,296.8 L424.4,296.0 L422.4,295.2 L420.4,294.5 L418.3,293.8 L416.2,293.2 L414.0,292.6 L411.8,292.0 L409.7,291.5 L407.5,291.0 L405.3,290.5 L403.2,290.1 L401.1,289.7 L399.0,289.4 L397.1,289.1 L395.1,288.8 L393.3,288.6 L391.6,288.4 L390.0,288.2 L388.5,288.0 L387.1,287.9 L385.8,287.8 L384.8,287.3 L383.8,286.7 L383.0,286.1 L382.3,285.5 L381.8,284.9 L381.5,284.3 L381.3,283.7 L381.2,283.1 L381.3,282.5 L381.5,282.0 L381.9,281.4 L382.5,280.8 L383.2,280.2 L384.0,279.5 L385.0,278.9 L386.2,278.6 L387.4,278.4 L388.9,278.3 L390.4,278.2 L392.1,278.0 L393.8,277.8 L395.7,277.5 L397.6,277.2 L399.6,276.9 L401.7,276.6 L403.8,276.2 L406.0,275.8 L408.2,275.3 L410.4,274.8 L412.6,274.2 L414.8,273.7 L417.0,273.0 L419.1,272.4 L421.2,271.7 L423.2,271.0 L425.2,270.2 L427.1,269.4 L428.9,268.6 L430.6,267.8 L432.1,266.9 L433.7,266.0 Z" fill="#dbebdb" stroke="#dbebdb" stroke-width="0.8" stroke-linejoin="round" opacity="0.85"/>
<path d="M459.7,273.8 L458.1,274.8 L456.4,275.7 L454.6,276.6 L452.6,277.5 L450.6,278.3 L448.6,279.1 L446.4,279.9 L444.2,280.6 L442.0,281.3 L439.7,281.9 L437.5,282.5 L435.2,283.1 L432.9,283.6 L430.7,284.1 L428.4,284.5 L426.3,284.9 L424.1,285.3 L422.1,285.6 L420.1,285.9 L418.2,286.1 L416.4,286.4 L414.7,286.5 L413.1,286.7 L411.6,286.8 L410.3,286.9 L409.1,287.0 L408.0,287.1 L407.1,287.1 L406.4,287.2 L405.8,287.2 L405.4,287.2 L405.1,287.2 L405.0,287.2 L405.1,287.2 L405.3,287.2 L405.7,287.2 L406.2,287.2 L406.9,287.3 L407.8,287.3 L408.8,287.4 L410.0,287.4 L411.3,287.5 L412.7,287.7 L414.2,287.8 L415.9,288.0 L417.7,288.2 L419.5,288.5 L421.5,288.7 L423.5,289.0 L425.6,289.4 L427.8,289.8 L430.0,290.2 L432.2,290.7 L434.5,291.2 L436.7,291.8 L439.0,292.3 L441.2,293.0 L443.4,293.7 L445.6,294.4 L447.7,295.1 L449.8,295.9 L451.8,296.7 L453.7,297.6 L455.5,298.5 L457.2,299.4 L458.8,300.4 L460.3,301.4 L461.6,302.4 L462.8,303.4 L463.9,304.5 L464.8,305.5 L465.6,306.6 L466.2,307.7 L466.7,308.8 L467.0,310.0 L467.1,311.1 L467.1,312.2 L466.9,313.3 L466.5,314.4 L466.0,315.6 L465.3,316.7 L464.5,317.7 L463.5,318.8 L462.3,319.9 L461.1,320.9 L459.6,321.9 L458.1,322.9 L456.5,323.8 L454.7,324.8 L452.8,325.6 L450.9,326.5 L448.8,327.3 L446.7,328.1 L444.6,328.9 L442.4,329.6 L440.1,330.2 L437.9,330.9 L435.6,331.4 L433.3,332.0 L431.0,332.5 L428.8,332.9 L426.6,333.4 L424.4,333.8 L422.3,334.1 L420.3,334.4 L418.3,334.7 L416.5,334.9 L414.7,335.1 L413.0,335.3 L411.5,335.5 L410.1,335.6 L408.8,335.7 L407.7,335.8 L406.7,335.8 L405.8,335.8 L405.2,335.9 L404.6,335.9 L404.3,335.9 L404.1,335.9 L404.0,335.9 L404.2,335.9 L404.5,335.9 L404.9,335.9 L405.5,335.9 L406.3,336.0 L407.2,336.0 L408.3,336.1 L409.5,336.2 L410.9,336.3 L412.3,336.4 L413.9,336.6 L415.6,336.8 L417.5,337.0 L419.4,337.3 L421.3,337.6 L423.4,337.9 L425.5,338.3 L427.7,338.7 L429.9,339.1 L432.2,339.6 L434.4,340.1 L436.7,340.7 L438.9,341.3 L441.2,341.9 L443.4,342.6 L445.5,343.4 L447.6,344.1 L449.6,344.9 L451.6,345.8 L453.5,346.7 L455.2,347.6 L456.9,348.5 L458.4,349.5 L459.9,350.5 L461.2,351.5 L462.3,352.5 L463.3,353.6 L464.2,354.7 L464.9,355.8 L465.5,356.9 L465.9,358.0 L466.1,359.1 L466.1,360.2 L466.0,361.4 L465.8,362.5 L465.3,363.6 L464.8,364.7 L464.0,365.8 L463.1,366.9 L462.0,367.9 L460.9,369.0 L459.5,370.0 L458.1,371.0 L456.5,372.0 L454.8,372.9 L453.0,373.8 L451.1,374.7 L449.1,375.5 L447.0,376.3 L444.9,377.1 L442.7,377.8 L440.5,378.5 L438.2,379.2 L436.0,379.8 L433.7,380.4 L431.4,380.9 L429.1,381.4 L426.9,381.8 L424.7,382.2 L422.6,382.6 L420.5,382.9 L418.5,383.2 L416.6,383.5 L414.7,383.7 L413.0,383.9 L411.4,384.1 L409.9,384.2 L408.6,384.3 L407.4,384.4 L406.3,384.5 L405.3,384.5 L404.6,384.6 L404.0,384.6 L403.5,384.6 L403.2,384.6 L403.1,384.6 L403.1,384.6 L403.3,384.6 L403.6,384.6 L404.2,384.6 L404.8,384.7 L405.7,384.7 L406.7,384.7 L407.8,384.8 L409.1,384.9 L410.5,385.0 L412.0,385.2 L413.6,385.4 L415.4,385.6 L417.2,385.8 L419.2,386.1 L421.2,386.4 L423.3,386.7 L425.4,387.1 L427.6,387.5 L429.8,388.0 L432.1,388.5 L434.4,389.0 L436.6,389.6 L438.9,390.3 L441.1,390.9 L443.3,391.6 L445.4,392.4 L447.5,393.2 L449.5,394.0 L451.4,394.8 L453.2,395.7 L454.9,396.6 L456.6,397.6 L458.1,398.6 L459.4,399.6 L460.7,400.6 L461.8,401.7 L462.7,402.7 L463.5,403.8 L464.2,404.9 L464.7,406.0 L465.0,407.1 L465.1,408.3 L465.1,409.4 L465.0,410.5 L464.6,411.6 L464.1,412.7 L463.5,413.8 L462.7,414.9 L461.7,416.0 L460.6,417.1 L459.4,418.1 L458.0,419.1 L456.5,420.1 L454.1,416.4 L455.5,415.5 L456.7,414.6 L457.7,413.8 L458.6,412.9 L459.3,412.1 L459.8,411.4 L460.2,410.7 L460.5,410.1 L460.7,409.6 L460.8,409.1 L460.8,408.6 L460.7,408.1 L460.5,407.5 L460.3,406.9 L459.9,406.2 L459.3,405.5 L458.6,404.7 L457.8,403.9 L456.7,403.0 L455.6,402.2 L454.3,401.3 L452.8,400.5 L451.2,399.6 L449.5,398.8 L447.7,398.0 L445.9,397.2 L443.9,396.5 L441.9,395.8 L439.8,395.1 L437.6,394.5 L435.5,393.9 L433.3,393.3 L431.1,392.8 L428.9,392.3 L426.8,391.9 L424.6,391.4 L422.5,391.1 L420.5,390.7 L418.5,390.4 L416.7,390.2 L414.8,389.9 L413.1,389.7 L411.5,389.6 L410.1,389.4 L408.7,389.3 L407.5,389.2 L406.4,388.6 L405.5,388.0 L404.7,387.4 L404.1,386.8 L403.6,386.2 L403.3,385.6 L403.1,385.0 L403.1,384.4 L403.2,383.8 L403.5,383.3 L403.9,382.7 L404.5,382.1 L405.2,381.4 L406.1,380.8 L407.1,380.2 L408.2,379.9 L409.6,379.8 L411.0,379.7 L412.6,379.5 L414.2,379.3 L416.0,379.1 L417.9,378.9 L419.8,378.6 L421.9,378.3 L423.9,377.9 L426.1,377.5 L428.2,377.1 L430.4,376.6 L432.6,376.1 L434.9,375.5 L437.0,374.9 L439.2,374.3 L441.4,373.7 L443.4,373.0 L445.5,372.2 L447.4,371.5 L449.3,370.7 L451.1,369.9 L452.7,369.0 L454.3,368.2 L455.7,367.3 L456.9,366.4 L458.1,365.6 L459.0,364.7 L459.8,363.9 L460.5,363.1 L461.0,362.4 L461.3,361.8 L461.6,361.2 L461.7,360.6 L461.7,360.2 L461.7,359.7 L461.6,359.2 L461.4,358.6 L461.1,358.0 L460.6,357.2 L460.0,356.5 L459.3,355.7 L458.3,354.9 L457.3,354.0 L456.0,353.1 L454.7,352.3 L453.2,351.4 L451.5,350.6 L449.8,349.8 L448.0,349.0 L446.0,348.2 L444.0,347.5 L442.0,346.8 L439.9,346.2 L437.7,345.5 L435.6,344.9 L433.4,344.4 L431.2,343.9 L429.0,343.4 L426.9,343.0 L424.7,342.6 L422.7,342.2 L420.7,341.9 L418.7,341.6 L416.9,341.4 L415.1,341.1 L413.5,341.0 L411.9,340.8 L410.5,340.7 L409.2,340.6 L408.0,340.3 L407.0,339.7 L406.1,339.0 L405.4,338.4 L404.9,337.8 L404.4,337.2 L404.2,336.6 L404.0,336.1 L404.1,335.5 L404.3,334.9 L404.6,334.3 L405.1,333.7 L405.7,333.1 L406.5,332.5 L407.4,331.9 L408.5,331.3 L409.7,331.2 L411.1,331.1 L412.6,330.9 L414.2,330.8 L415.9,330.6 L417.7,330.3 L419.6,330.1 L421.6,329.8 L423.7,329.4 L425.8,329.0 L427.9,328.6 L430.1,328.2 L432.3,327.7 L434.5,327.2 L436.7,326.6 L438.9,326.0 L441.1,325.4 L443.2,324.7 L445.3,324.0 L447.2,323.2 L449.2,322.4 L451.0,321.6 L452.7,320.8 L454.3,320.0 L455.8,319.1 L457.2,318.3 L458.4,317.4 L459.5,316.5 L460.4,315.7 L461.1,314.9 L461.7,314.1 L462.1,313.4 L462.4,312.8 L462.6,312.3 L462.7,311.7 L462.7,311.3 L462.7,310.8 L462.5,310.2 L462.3,309.6 L461.9,309.0 L461.4,308.2 L460.7,307.5 L459.9,306.7 L458.9,305.8 L457.7,305.0 L456.5,304.1 L455.0,303.2 L453.5,302.4 L451.8,301.6 L450.0,300.8 L448.2,300.0 L446.2,299.2 L444.2,298.5 L442.1,297.8 L440.0,297.2 L437.8,296.6 L435.6,296.0 L433.5,295.5 L431.3,295.0 L429.1,294.5 L427.0,294.1 L424.9,293.7 L422.8,293.4 L420.9,293.1 L418.9,292.8 L417.1,292.6 L415.4,292.4 L413.8,292.2 L412.3,292.0 L410.9,291.9 L409.6,291.8 L408.6,291.3 L407.6,290.7 L406.8,290.1 L406.1,289.5 L405.6,288.9 L405.3,288.3 L405.1,287.7 L405.0,287.1 L405.1,286.5 L405.3,286.0 L405.7,285.4 L406.3,284.8 L407.0,284.2 L407.8,283.5 L408.8,282.9 L410.0,282.6 L411.2,282.4 L412.7,282.3 L414.2,282.2 L415.9,282.0 L417.6,281.8 L419.5,281.5 L421.4,281.2 L423.4,280.9 L425.5,280.6 L427.6,280.2 L429.8,279.8 L432.0,279.3 L434.2,278.8 L436.4,278.2 L438.6,277.7 L440.8,277.0 L442.9,276.4 L445.0,275.7 L447.0,275.0 L449.0,274.2 L450.9,273.4 L452.7,272.6 L454.4,271.8 L455.9,270.9 L457.5,270.0 Z" fill="#e9dccc" stroke="#e9dccc" stroke-width="0.8" stroke-linejoin="round" opacity="0.85"/>
<path d="M412.7,266.4 L411.1,267.4 L409.4,268.3 L407.6,269.2 L405.6,270.1 L403.6,270.9 L401.6,271.7 L399.4,272.5 L397.2,273.2 L395.0,273.9 L392.7,274.5 L390.5,275.1 L388.2,275.7 L385.9,276.2 L383.7,276.7 L381.4,277.1 L379.3,277.5 L377.1,277.9 L375.1,278.2 L373.1,278.5 L371.2,278.7 L369.4,279.0 L367.7,279.1 L366.1,279.3 L364.6,279.4 L363.3,279.5 L362.1,279.6 L361.0,279.7 L360.1,279.7 L359.4,279.8 L358.8,279.8 L358.4,279.8 L358.1,279.8 L358.0,279.8 L358.1,279.8 L358.3,279.8 L358.7,279.8 L359.2,279.8 L359.9,279.9 L360.8,279.9 L361.8,280.0 L363.0,280.0 L364.3,280.1 L365.7,280.3 L367.2,280.4 L368.9,280.6 L370.7,280.8 L372.5,281.1 L374.5,281.3 L376.5,281.6 L378.6,282.0 L380.8,282.4 L383.0,282.8 L385.2,283.3 L387.5,283.8 L389.7,284.4 L392.0,284.9 L394.2,285.6 L396.4,286.3 L398.6,287.0 L400.7,287.7 L402.8,288.5 L404.8,289.3 L406.7,290.2 L408.5,291.1 L410.2,292.0 L411.8,293.0 L413.3,294.0 L414.6,295.0 L415.8,296.0 L416.9,297.1 L417.8,298.1 L418.6,299.2 L419.2,300.3 L419.7,301.4 L420.0,302.6 L420.1,303.7 L420.1,304.8 L419.9,305.9 L419.5,307.0 L419.0,308.2 L418.3,309.3 L417.5,310.3 L416.5,311.4 L415.3,312.5 L414.1,313.5 L412.6,314.5 L411.1,315.5 L409.5,316.4 L407.7,317.4 L405.8,318.2 L403.9,319.1 L401.8,319.9 L399.7,320.7 L397.6,321.5 L395.4,322.2 L393.1,322.8 L390.9,323.5 L388.6,324.0 L386.3,324.6 L384.0,325.1 L381.8,325.5 L379.6,326.0 L377.4,326.4 L375.3,326.7 L373.3,327.0 L371.3,327.3 L369.5,327.5 L367.7,327.7 L366.0,327.9 L364.5,328.1 L363.1,328.2 L361.8,328.3 L360.7,328.4 L359.7,328.4 L358.8,328.4 L358.2,328.5 L357.6,328.5 L357.3,328.5 L357.1,328.5 L357.0,328.5 L357.2,328.5 L357.5,328.5 L357.9,328.5 L358.5,328.5 L359.3,328.6 L360.2,328.6 L361.3,328.7 L362.5,328.8 L363.9,328.9 L365.3,329.0 L366.9,329.2 L368.6,329.4 L370.5,329.6 L372.4,329.9 L374.3,330.2 L376.4,330.5 L378.5,330.9 L380.7,331.3 L382.9,331.7 L385.2,332.2 L387.4,332.7 L389.7,333.3 L391.9,333.9 L394.2,334.5 L396.4,335.2 L398.5,336.0 L400.6,336.7 L402.6,337.5 L404.6,338.4 L406.5,339.3 L408.2,340.2 L409.9,341.1 L411.4,342.1 L412.9,343.1 L414.2,344.1 L415.3,345.1 L416.3,346.2 L417.2,347.3 L417.9,348.4 L418.5,349.5 L418.9,350.6 L419.1,351.7 L419.1,352.8 L419.0,354.0 L418.8,355.1 L418.3,356.2 L417.8,357.3 L417.0,358.4 L416.1,359.5 L415.0,360.5 L413.9,361.6 L412.5,362.6 L411.1,363.6 L409.5,364.6 L407.8,365.5 L406.0,366.4 L404.1,367.3 L402.1,368.1 L400.0,368.9 L397.9,369.7 L395.7,370.4 L393.5,371.1 L391.2,371.8 L389.0,372.4 L386.7,373.0 L384.4,373.5 L382.1,374.0 L379.9,374.4 L377.7,374.8 L375.6,375.2 L373.5,375.5 L371.5,375.8 L369.6,376.1 L367.7,376.3 L366.0,376.5 L364.4,376.7 L362.9,376.8 L361.6,376.9 L360.4,377.0 L359.3,377.1 L358.3,377.1 L357.6,377.2 L357.0,377.2 L356.5,377.2 L356.2,377.2 L356.1,377.2 L356.1,377.2 L356.3,377.2 L356.6,377.2 L357.2,377.2 L357.8,377.3 L358.7,377.3 L359.7,377.3 L360.8,377.4 L362.1,377.5 L363.5,377.6 L365.0,377.8 L366.6,378.0 L368.4,378.2 L370.2,378.4 L372.2,378.7 L374.2,379.0 L376.3,379.3 L378.4,379.7 L380.6,380.1 L382.8,380.6 L385.1,381.1 L387.4,381.6 L389.6,382.2 L391.9,382.9 L394.1,383.5 L396.3,384.2 L398.4,385.0 L400.5,385.8 L402.5,386.6 L404.4,387.4 L406.2,388.3 L407.9,389.2 L409.6,390.2 L411.1,391.2 L412.4,392.2 L413.7,393.2 L414.8,394.3 L415.7,395.3 L416.5,396.4 L417.2,397.5 L417.7,398.6 L418.0,399.7 L418.1,400.9 L418.1,402.0 L418.0,403.1 L417.6,404.2 L417.1,405.3 L416.5,406.4 L415.7,407.5 L414.7,408.6 L413.6,409.7 L412.4,410.7 L411.0,411.7 L409.5,412.7" fill="none" stroke="#34344e" stroke-width="0.9"/>
<circle cx="413.3" cy="264.2" r="4" fill="#e6e8f4" stroke="#34344e" stroke-width="0.9"/>
<circle cx="409.7" cy="409.3" r="4" fill="#e6e8f4" stroke="#34344e" stroke-width="0.9"/>
<path d="M435.9,269.8 L434.3,270.8 L432.6,271.7 L430.8,272.6 L428.8,273.5 L426.8,274.3 L424.8,275.1 L422.6,275.9 L420.4,276.6 L418.2,277.3 L415.9,277.9 L413.7,278.5 L411.4,279.1 L409.1,279.6 L406.9,280.1 L404.6,280.5 L402.5,280.9 L400.3,281.3 L398.3,281.6 L396.3,281.9 L394.4,282.1 L392.6,282.4 L390.9,282.5 L389.3,282.7 L387.8,282.8 L386.5,282.9 L385.3,283.0 L384.2,283.1 L383.3,283.1 L382.6,283.2 L382.0,283.2 L381.6,283.2 L381.3,283.2 L381.2,283.2 L381.3,283.2 L381.5,283.2 L381.9,283.2 L382.4,283.2 L383.1,283.3 L384.0,283.3 L385.0,283.4 L386.2,283.4 L387.5,283.5 L388.9,283.7 L390.4,283.8 L392.1,284.0 L393.9,284.2 L395.7,284.5 L397.7,284.7 L399.7,285.0 L401.8,285.4 L404.0,285.8 L406.2,286.2 L408.4,286.7 L410.7,287.2 L412.9,287.8 L415.2,288.3 L417.4,289.0 L419.6,289.7 L421.8,290.4 L423.9,291.1 L426.0,291.9 L428.0,292.7 L429.9,293.6 L431.7,294.5 L433.4,295.4 L435.0,296.4 L436.5,297.4 L437.8,298.4 L439.0,299.4 L440.1,300.5 L441.0,301.5 L441.8,302.6 L442.4,303.7 L442.9,304.8 L443.2,306.0 L443.3,307.1 L443.3,308.2 L443.1,309.3 L442.7,310.4 L442.2,311.6 L441.5,312.7 L440.7,313.7 L439.7,314.8 L438.5,315.9 L437.3,316.9 L435.8,317.9 L434.3,318.9 L432.7,319.8 L430.9,320.8 L429.0,321.6 L427.1,322.5 L425.0,323.3 L422.9,324.1 L420.8,324.9 L418.6,325.6 L416.3,326.2 L414.1,326.9 L411.8,327.4 L409.5,328.0 L407.2,328.5 L405.0,328.9 L402.8,329.4 L400.6,329.8 L398.5,330.1 L396.5,330.4 L394.5,330.7 L392.7,330.9 L390.9,331.1 L389.2,331.3 L387.7,331.5 L386.3,331.6 L385.0,331.7 L383.9,331.8 L382.9,331.8 L382.0,331.8 L381.4,331.9 L380.8,331.9 L380.5,331.9 L380.3,331.9 L380.2,331.9 L380.4,331.9 L380.7,331.9 L381.1,331.9 L381.7,331.9 L382.5,332.0 L383.4,332.0 L384.5,332.1 L385.7,332.2 L387.1,332.3 L388.5,332.4 L390.1,332.6 L391.8,332.8 L393.7,333.0 L395.6,333.3 L397.5,333.6 L399.6,333.9 L401.7,334.3 L403.9,334.7 L406.1,335.1 L408.4,335.6 L410.6,336.1 L412.9,336.7 L415.1,337.3 L417.4,337.9 L419.6,338.6 L421.7,339.4 L423.8,340.1 L425.8,340.9 L427.8,341.8 L429.7,342.7 L431.4,343.6 L433.1,344.5 L434.6,345.5 L436.1,346.5 L437.4,347.5 L438.5,348.5 L439.5,349.6 L440.4,350.7 L441.1,351.8 L441.7,352.9 L442.1,354.0 L442.3,355.1 L442.3,356.2 L442.2,357.4 L442.0,358.5 L441.5,359.6 L441.0,360.7 L440.2,361.8 L439.3,362.9 L438.2,363.9 L437.1,365.0 L435.7,366.0 L434.3,367.0 L432.7,368.0 L431.0,368.9 L429.2,369.8 L427.3,370.7 L425.3,371.5 L423.2,372.3 L421.1,373.1 L418.9,373.8 L416.7,374.5 L414.4,375.2 L412.2,375.8 L409.9,376.4 L407.6,376.9 L405.3,377.4 L403.1,377.8 L400.9,378.2 L398.8,378.6 L396.7,378.9 L394.7,379.2 L392.8,379.5 L390.9,379.7 L389.2,379.9 L387.6,380.1 L386.1,380.2 L384.8,380.3 L383.6,380.4 L382.5,380.5 L381.5,380.5 L380.8,380.6 L380.2,380.6 L379.7,380.6 L379.4,380.6 L379.3,380.6 L379.3,380.6 L379.5,380.6 L379.8,380.6 L380.4,380.6 L381.0,380.7 L381.9,380.7 L382.9,380.7 L384.0,380.8 L385.3,380.9 L386.7,381.0 L388.2,381.2 L389.8,381.4 L391.6,381.6 L393.4,381.8 L395.4,382.1 L397.4,382.4 L399.5,382.7 L401.6,383.1 L403.8,383.5 L406.0,384.0 L408.3,384.5 L410.6,385.0 L412.8,385.6 L415.1,386.3 L417.3,386.9 L419.5,387.6 L421.6,388.4 L423.7,389.2 L425.7,390.0 L427.6,390.8 L429.4,391.7 L431.1,392.6 L432.8,393.6 L434.3,394.6 L435.6,395.6 L436.9,396.6 L438.0,397.7 L438.9,398.7 L439.7,399.8 L440.4,400.9 L440.9,402.0 L441.2,403.1 L441.3,404.3 L441.3,405.4 L441.2,406.5 L440.8,407.6 L440.3,408.7 L439.7,409.8 L438.9,410.9 L437.9,412.0 L436.8,413.1 L435.6,414.1 L434.2,415.1 L432.7,416.1" fill="none" stroke="#2e4e3e" stroke-width="0.9"/>
<circle cx="436.5" cy="267.6" r="4" fill="#e6f1e6" stroke="#2e4e3e" stroke-width="0.9"/>
<circle cx="432.9" cy="412.7" r="4" fill="#e6f1e6" stroke="#2e4e3e" stroke-width="0.9"/>
<path d="M459.7,273.8 L458.1,274.8 L456.4,275.7 L454.6,276.6 L452.6,277.5 L450.6,278.3 L448.6,279.1 L446.4,279.9 L444.2,280.6 L442.0,281.3 L439.7,281.9 L437.5,282.5 L435.2,283.1 L432.9,283.6 L430.7,284.1 L428.4,284.5 L426.3,284.9 L424.1,285.3 L422.1,285.6 L420.1,285.9 L418.2,286.1 L416.4,286.4 L414.7,286.5 L413.1,286.7 L411.6,286.8 L410.3,286.9 L409.1,287.0 L408.0,287.1 L407.1,287.1 L406.4,287.2 L405.8,287.2 L405.4,287.2 L405.1,287.2 L405.0,287.2 L405.1,287.2 L405.3,287.2 L405.7,287.2 L406.2,287.2 L406.9,287.3 L407.8,287.3 L408.8,287.4 L410.0,287.4 L411.3,287.5 L412.7,287.7 L414.2,287.8 L415.9,288.0 L417.7,288.2 L419.5,288.5 L421.5,288.7 L423.5,289.0 L425.6,289.4 L427.8,289.8 L430.0,290.2 L432.2,290.7 L434.5,291.2 L436.7,291.8 L439.0,292.3 L441.2,293.0 L443.4,293.7 L445.6,294.4 L447.7,295.1 L449.8,295.9 L451.8,296.7 L453.7,297.6 L455.5,298.5 L457.2,299.4 L458.8,300.4 L460.3,301.4 L461.6,302.4 L462.8,303.4 L463.9,304.5 L464.8,305.5 L465.6,306.6 L466.2,307.7 L466.7,308.8 L467.0,310.0 L467.1,311.1 L467.1,312.2 L466.9,313.3 L466.5,314.4 L466.0,315.6 L465.3,316.7 L464.5,317.7 L463.5,318.8 L462.3,319.9 L461.1,320.9 L459.6,321.9 L458.1,322.9 L456.5,323.8 L454.7,324.8 L452.8,325.6 L450.9,326.5 L448.8,327.3 L446.7,328.1 L444.6,328.9 L442.4,329.6 L440.1,330.2 L437.9,330.9 L435.6,331.4 L433.3,332.0 L431.0,332.5 L428.8,332.9 L426.6,333.4 L424.4,333.8 L422.3,334.1 L420.3,334.4 L418.3,334.7 L416.5,334.9 L414.7,335.1 L413.0,335.3 L411.5,335.5 L410.1,335.6 L408.8,335.7 L407.7,335.8 L406.7,335.8 L405.8,335.8 L405.2,335.9 L404.6,335.9 L404.3,335.9 L404.1,335.9 L404.0,335.9 L404.2,335.9 L404.5,335.9 L404.9,335.9 L405.5,335.9 L406.3,336.0 L407.2,336.0 L408.3,336.1 L409.5,336.2 L410.9,336.3 L412.3,336.4 L413.9,336.6 L415.6,336.8 L417.5,337.0 L419.4,337.3 L421.3,337.6 L423.4,337.9 L425.5,338.3 L427.7,338.7 L429.9,339.1 L432.2,339.6 L434.4,340.1 L436.7,340.7 L438.9,341.3 L441.2,341.9 L443.4,342.6 L445.5,343.4 L447.6,344.1 L449.6,344.9 L451.6,345.8 L453.5,346.7 L455.2,347.6 L456.9,348.5 L458.4,349.5 L459.9,350.5 L461.2,351.5 L462.3,352.5 L463.3,353.6 L464.2,354.7 L464.9,355.8 L465.5,356.9 L465.9,358.0 L466.1,359.1 L466.1,360.2 L466.0,361.4 L465.8,362.5 L465.3,363.6 L464.8,364.7 L464.0,365.8 L463.1,366.9 L462.0,367.9 L460.9,369.0 L459.5,370.0 L458.1,371.0 L456.5,372.0 L454.8,372.9 L453.0,373.8 L451.1,374.7 L449.1,375.5 L447.0,376.3 L444.9,377.1 L442.7,377.8 L440.5,378.5 L438.2,379.2 L436.0,379.8 L433.7,380.4 L431.4,380.9 L429.1,381.4 L426.9,381.8 L424.7,382.2 L422.6,382.6 L420.5,382.9 L418.5,383.2 L416.6,383.5 L414.7,383.7 L413.0,383.9 L411.4,384.1 L409.9,384.2 L408.6,384.3 L407.4,384.4 L406.3,384.5 L405.3,384.5 L404.6,384.6 L404.0,384.6 L403.5,384.6 L403.2,384.6 L403.1,384.6 L403.1,384.6 L403.3,384.6 L403.6,384.6 L404.2,384.6 L404.8,384.7 L405.7,384.7 L406.7,384.7 L407.8,384.8 L409.1,384.9 L410.5,385.0 L412.0,385.2 L413.6,385.4 L415.4,385.6 L417.2,385.8 L419.2,386.1 L421.2,386.4 L423.3,386.7 L425.4,387.1 L427.6,387.5 L429.8,388.0 L432.1,388.5 L434.4,389.0 L436.6,389.6 L438.9,390.3 L441.1,390.9 L443.3,391.6 L445.4,392.4 L447.5,393.2 L449.5,394.0 L451.4,394.8 L453.2,395.7 L454.9,396.6 L456.6,397.6 L458.1,398.6 L459.4,399.6 L460.7,400.6 L461.8,401.7 L462.7,402.7 L463.5,403.8 L464.2,404.9 L464.7,406.0 L465.0,407.1 L465.1,408.3 L465.1,409.4 L465.0,410.5 L464.6,411.6 L464.1,412.7 L463.5,413.8 L462.7,414.9 L461.7,416.0 L460.6,417.1 L459.4,418.1 L458.0,419.1 L456.5,420.1" fill="none" stroke="#4a3828" stroke-width="0.9"/>
<circle cx="460.3" cy="271.6" r="4" fill="#f0e6da" stroke="#4a3828" stroke-width="0.9"/>
<circle cx="456.7" cy="416.7" r="4" fill="#f0e6da" stroke="#4a3828" stroke-width="0.9"/>
<rect x="118.5" y="103.5" width="500" height="396" fill="none" stroke="#585858" stroke-width="1" stroke-dasharray="9.4 4.9"/>
<g fill="none" stroke="#5a5ab0" stroke-width="0.9"><path d="M17.5,462 L17.5,511 L47.3,511 Z"/><rect x="17.5" y="503.8" width="7" height="7"/></g>
<text x="19.3" y="484" font-family="Liberation Sans, sans-serif" font-size="7" fill="#5a5ab0">Y</text>
<text x="33.5" y="510.3" font-family="Liberation Sans, sans-serif" font-size="7.5" fill="#5a5ab0">X</text>
<g stroke="#808080" stroke-width="1"><line x1="740" y1="403.5" x2="780" y2="403.5"/><line x1="760.5" y1="383" x2="760.5" y2="424"/></g>
</svg>
<!-- MDI child buttons -->
<svg class="abs" style="left:758px;top:82px" width="36" height="12" viewBox="0 0 36 12">
<rect x="2.5" y="6" width="7" height="2" fill="#e6e6e6" stroke="#8a8a8a" stroke-width="0.5"/>
<rect x="14" y="3.2" width="5.5" height="6" fill="none" stroke="#e6e6e6" stroke-width="1.1"/><rect x="15.6" y="1.6" width="5.5" height="6" fill="none" stroke="#e6e6e6" stroke-width="0.9"/><rect x="15.2" y="5" width="3" height="3" fill="#555"/>
<path d="M25.5,3 L31.5,9 M31.5,3 L25.5,9" stroke="#e8e8e8" stroke-width="1.8"/>
</svg>

<!-- ======= window frame ======= -->
<div class="b" style="left:0;top:0;width:475px;height:1.6px;background:#4a9aaa"></div>
<div class="b" style="left:475px;top:0;width:325px;height:1px;background:#dedede"></div>
<div class="b" style="left:0;top:0;width:1.7px;height:485px;background:#4798a8"></div>
<div class="b" style="left:0;top:485px;width:1.7px;height:98px;background:#0c0c0c"></div>
<!-- title bar -->
<div class="b" id="title" style="left:1.7px;top:1px;width:798.3px;height:16.5px;background:linear-gradient(#5c5c5c 0,#7c7c7c 0.6px,#747474 3.4px,#585858 6px,#3e3e3e 8.6px,#383838 14.4px,#565656 16.5px)"></div>
<div class="b" style="left:1.7px;top:2px;width:3.6px;height:78px;background:#67636b"></div>
<!-- tab row -->
<div class="b" id="tabrow" style="left:1.7px;top:17.5px;width:798.3px;height:12.7px;background:linear-gradient(#8c8c8c 0,#747676 3px,#606464 5.6px,#5c6060 10.8px,#404848 11.4px,#404848 12.7px)"></div>
<!-- ribbon dark body -->
<div class="b" style="left:1.7px;top:30px;width:798.3px;height:49.7px;background:#5f5f5f"></div>
<div class="b" style="left:5px;top:74.6px;width:530px;height:5.1px;background:linear-gradient(#4c4c4c,#585858)"></div>
<div class="b" style="left:797px;top:17px;width:3px;height:63px;background:#6a6a6a"></div>
<!-- app button -->
<svg class="abs" style="left:1.7px;top:2px" width="22" height="28" viewBox="0 0 22 28">
<rect x="0" y="0" width="21.4" height="28" fill="#625f64"/>
<rect x="20.6" y="0" width="0.9" height="28" fill="#4a4a4a"/>
<path d="M1.4,2.8 L7.2,0.6 L8.2,4.4 L6.4,5.2 L11.2,21.6 L9.6,22.2 L4.2,6 L2.6,6.4 Z" fill="#7e0e16"/>
<path d="M6.4,5.2 L10.6,4.6 L13.4,22 L11.2,21.6 Z" fill="#a3141c"/>
<path d="M7.2,0.6 L18.2,0.6 L18.2,4.6 L8.2,4.6 Z" fill="#e02c36"/>
<path d="M10.6,4.6 L17,4.6 L18.2,19.8 L13.4,22 Z" fill="#cc1f29"/>
<path d="M15.4,4.6 L17,4.6 L18.2,19.8 L16.6,20.5 Z" fill="#9c121a"/>
<path d="M16.4,23.4 L19.8,23.4 L18.1,25.4 Z" fill="#000"/>
</svg>
<!-- quick access toolbar -->
<div class="b" style="left:24px;top:3.5px;width:31.5px;height:12px;border-radius:2px 2px 0 0;background:linear-gradient(#a4a4a4,#8c8c8c 50%,#7e7e7e)"></div>
<svg class="abs" style="left:24px;top:3px" width="32" height="13" viewBox="0 0 32 13">
<path d="M4.5,3.2 L8,3.2 L8.8,4.2 L12.8,6.5 L11,9.6 L4.5,9.6 Z" fill="#dfe3ea" stroke="#50586a" stroke-width="0.9"/>
<rect x="18.5" y="2" width="8.5" height="10" fill="#f1f1f1" stroke="#b9b9b9" stroke-width="0.6"/>
<rect x="19.8" y="6.2" width="5" height="4" fill="#e2d2d2"/>
<path d="M24.5,4.6 L28,4.6 M25.2,3.2 L23.8,4.6 L25.2,6" stroke="#d42a34" stroke-width="1.2" fill="none"/>
</svg>
<!-- tabs -->
<div class="b" style="left:29px;top:17.5px;width:36.5px;height:13px;border-radius:2.5px 2.5px 0 0;background:linear-gradient(#eaeaea,#d6d6d6 45%,#bdbdbd 80%,#b2b2b2)"></div>
<svg class="abs" style="left:114px;top:20px" width="12" height="8" viewBox="0 0 12 8"><rect x="1.5" y="1.5" width="8" height="4.6" rx="1" fill="#ececec"/><path d="M3.8,3 L7.2,3 L5.5,4.9 Z" fill="#444"/></svg>
<!-- window buttons -->
<svg class="abs" style="left:758px;top:3px" width="40" height="14" viewBox="0 0 40 14">
<rect x="4.2" y="7.2" width="5.8" height="1.8" fill="#dedede"/>
<rect x="17.4" y="4.4" width="5.4" height="4.4" fill="none" stroke="#e6e6e6" stroke-width="1.2"/>
<path d="M29.8,4.8 L34,9 M34,4.8 L29.8,9" stroke="#eeeeee" stroke-width="1.5"/>
</svg>
<div class="b" style="left:786px;top:19.9px;width:6.6px;height:7.5px;background:#f4f4f4"></div>
<span class="t" style="left:787.4px;top:20px;font:700 7px/7.5px 'Liberation Sans',sans-serif;color:#3a3a3a">?</span>

<!-- ribbon panels -->
<div class="b panel" style="left:5.5px;width:80px"></div><div class="b ptitle" style="left:5.5px;width:80px"></div>
<div class="b panel" style="left:87px;width:39.5px"></div><div class="b ptitle" style="left:87px;width:39.5px"></div>
<div class="b panel" style="left:128px;width:98px"></div><div class="b ptitle" style="left:128px;width:98px"></div>
<div class="b panel" style="left:227.5px;width:120.5px"></div><div class="b ptitle" style="left:227.5px;width:120.5px"></div>
<div class="b panel" style="left:349.5px;width:116.5px"></div><div class="b ptitle" style="left:349.5px;width:116.5px"></div>
<div class="b panel" style="left:467.5px;width:67px"></div><div class="b ptitle" style="left:467.5px;width:67px"></div>

<!-- Files icons -->
<svg class="abs" style="left:5px;top:30px" width="82" height="36" viewBox="0 0 82 36">
<path d="M10.5,6 L14.4,6 L15.2,7 L19.8,8.6 L18,13.2 L10.5,13.2 Z" fill="#e8ebf2" stroke="#5a6276" stroke-width="0.9"/>
<path d="M12,9.2 L19.8,8.8 L18,13.2 L10.5,13.2 Z" fill="#cfd5e2" stroke="#5a6276" stroke-width="0.6"/>
<rect x="43.2" y="4.8" width="17" height="20.4" rx="1" fill="#efeded" stroke="#c9c3c3" stroke-width="0.7"/>
<rect x="45.2" y="7" width="8" height="9" fill="#fff" stroke="#e0b8ba" stroke-width="0.7"/>
<rect x="47.2" y="10" width="9" height="11" fill="#e6eeee" stroke="#d0b0b2" stroke-width="0.7"/>
<path d="M57.4,12.6 L61.6,12.6 M59.2,10.8 L57.2,12.6 L59.2,14.4" stroke="#d82c3a" stroke-width="1.3" fill="none"/>
<rect x="60.2" y="11.4" width="1.8" height="2.4" fill="#d82c3a"/>
</svg>
<!-- Output icons -->
<svg class="abs" style="left:87px;top:30px" width="40" height="36" viewBox="0 0 40 36">
<path d="M6.5,12 L8.5,6.4 L19.5,6.4 L21.5,12 Z" fill="#fafafa" stroke="#70747c" stroke-width="0.9"/>
<rect x="4.2" y="10.6" width="19.4" height="8.8" rx="1.6" fill="#c3c8d0" stroke="#5c626c" stroke-width="0.9"/>
<rect x="4.8" y="11.2" width="18.2" height="3" rx="1" fill="#eceff4"/>
<rect x="7.4" y="17.4" width="13" height="6.4" fill="#dfe6ec" stroke="#6c7480" stroke-width="0.8"/>
<rect x="27.6" y="5.4" width="7.4" height="5.2" rx="1" fill="#d8dde6" stroke="#4e5868" stroke-width="0.8"/><rect x="28.8" y="4" width="5" height="2.4" fill="#fff" stroke="#4e5868" stroke-width="0.6"/><path d="M32.2,11.2 L35.8,11.2 L34.6,9.9 M35.8,11.2 L34.6,12.4" stroke="#1d4e9a" stroke-width="1.1" fill="none"/>
<path d="M28,21 L28,28.6 L33.4,28.6 L33.4,23 L31.4,21 Z" fill="#fcfcfc" stroke="#555" stroke-width="0.7"/><circle cx="32.2" cy="26.4" r="2.3" fill="#f4f6fa" stroke="#444" stroke-width="0.8"/><path d="M33.8,28.2 L35.6,30.4" stroke="#333" stroke-width="1.1"/>
</svg>
<!-- Navigation icons -->
<svg class="abs" style="left:128px;top:30px" width="98" height="36" viewBox="0 0 98 36">
<path d="M8.2,10 C7.8,8 10,7.4 11.6,8.8 L14.2,8.2 C18.2,8.6 22,11.6 22.6,16 C22.2,18.6 19.8,20.2 17.4,20 C14.4,19.8 12.2,18.4 10.4,17.4 C8.8,16.4 8.2,15 9.2,14 L12,14.6 C10.4,13 8.6,12 8.2,10 Z" fill="#f2f2f0" stroke="#707070" stroke-width="0.9"/>
<path d="M12,14.6 L15.8,15.2 M11.8,8.8 L18.2,13.2" stroke="#8e8e8e" stroke-width="0.7" fill="none"/>
<circle cx="42.8" cy="11.4" r="6.2" fill="#f6fafc" stroke="#5a5f66" stroke-width="1.1"/><circle cx="42.8" cy="11.4" r="4.8" fill="none" stroke="#d3e4ec" stroke-width="0.9"/>
<path d="M47.2,15.8 L52.4,21" stroke="#4a4a4a" stroke-width="2.1" stroke-linecap="round"/>
<g fill="#f4f6f8" stroke="#4c4c4c" stroke-width="0.9">
<circle cx="65" cy="8.6" r="3.1"/><circle cx="77.3" cy="8.6" r="3.1"/><circle cx="89.4" cy="8.4" r="3"/>
<circle cx="65" cy="24" r="3.1"/><circle cx="77.3" cy="24" r="3.1"/>
</g>
<g stroke="#3a3a3a" stroke-width="1.4" stroke-linecap="round">
<path d="M67.2,11 L69.6,13.6"/><path d="M79.5,11 L81.9,13.6"/><path d="M91.6,10.8 L93.8,13.2"/>
<path d="M67.2,26.4 L69.6,29"/><path d="M79.5,26.4 L81.9,29"/>
</g>
<g stroke="#555" stroke-width="0.7" fill="none">
<rect x="63.5" y="7.1" width="3" height="3"/><path d="M75.7,7 L78.9,10.2 M78.9,7 L75.7,10.2"/><path d="M91,5 L93,6.6 L91.2,8" />
<path d="M63.3,24 L66.7,24 M65,22.3 L65,25.7"/><path d="M75.6,24 L79,24"/>
<path d="M86.8,25 L95,25 M91,20.8 L91,29.2 M88.4,23.7 L86.8,25 L88.4,26.3 M93.4,23.7 L95,25 L93.4,26.3" stroke="#444" stroke-width="0.9"/>
<ellipse cx="91" cy="25" rx="2.8" ry="1.5" stroke="#777"/>
</g>
</svg>
<!-- View panel -->
<svg class="abs" style="left:227px;top:30px" width="122" height="36" viewBox="0 0 122 36">
<path d="M3.6,7.8 L8.4,7.8 L10.2,9.6 L10.2,15.4 L3.6,15.4 Z" fill="#fcfcfc" stroke="#70747c" stroke-width="0.8"/><rect x="6.8" y="12" width="6" height="5.2" fill="#dfe7f2" stroke="#6a7890" stroke-width="0.8"/>
<rect x="20.2" y="9.4" width="6" height="6" fill="#e8e8e8" stroke="#3e3e3e" stroke-width="1"/><path d="M20.2,9.4 L22.4,7.4 L28.4,7.4 L28.4,13.4 L26.2,15.4 M26.2,9.4 L28.4,7.4" fill="none" stroke="#3e3e3e" stroke-width="0.9"/>
<path d="M32.6,9.2 L36.4,10.8 L36.4,16.2 L32.6,14.4 Z" fill="#6e6e6e" stroke="#333" stroke-width="0.7"/><path d="M36.4,10.8 L40.4,9.2 L40.4,14.4 L36.4,16.2 Z" fill="#b6b6b6" stroke="#333" stroke-width="0.7"/><path d="M32.6,9.2 L36.6,7.8 L40.4,9.2 L36.4,10.8 Z" fill="#e0e0e0" stroke="#333" stroke-width="0.7"/>
<rect x="43.6" y="5.8" width="76.4" height="11.4" rx="1.6" fill="#f3f3f3" stroke="#4a4a4a" stroke-width="1"/>
<rect x="45" y="7" width="9.2" height="9" fill="#0a0a0a"/>
<path d="M113.2,10.6 L117.2,10.6 L115.2,13 Z" fill="#111"/>
<rect x="1.8" y="19.6" width="113" height="10.8" fill="#d6d3cb" stroke="#8c8c8c" stroke-width="0.8"/>
<rect x="106.4" y="20.8" width="7.6" height="8.6" fill="#d8d5cd" stroke="#f8f8f8" stroke-width="0.7"/><path d="M106.4,29.4 L114,29.4 L114,20.8" fill="none" stroke="#6a6a6a" stroke-width="0.8"/>
<path d="M108.4,24 L112,24 L110.2,26.4 Z" fill="#8e8e8e"/>
</svg>
<!-- Layers panel -->
<svg class="abs" style="left:349px;top:30px" width="118" height="36" viewBox="0 0 118 36">
<g stroke="#5e6a7e" stroke-width="0.8" fill="#eef2f8">
<rect x="4.6" y="9" width="4.8" height="3.6"/><rect x="7.6" y="11.6" width="5.4" height="5.2"/><path d="M5.2,8.2 L9.8,6.8 L13,8.2" fill="none"/>
<path d="M17,9.8 L24.6,9.8 L23.2,8.4 M24.6,9.8 L23.2,11.2" fill="none" stroke="#3a62b6" stroke-width="0.9"/><circle cx="21" cy="14.2" r="2.7" fill="#cfe0f8" stroke="#3a6ac0"/>
<path d="M29,10.2 C31,7.4 35.2,7.6 36.4,10.8 L36.4,15.4 M34.8,13.8 L36.4,15.6 L38,13.8" fill="none" stroke="#5e86c8" stroke-width="0.9"/><path d="M29.2,11.4 L34,11.4" stroke="#8aa" />
</g>
<rect x="2.4" y="19.6" width="112.6" height="11.6" fill="#ffffff" stroke="#5a5a5a" stroke-width="1"/>
<rect x="105.4" y="20.8" width="8.6" height="9.4" fill="#d4d0c8" stroke="#fafafa" stroke-width="0.7"/><path d="M105.4,30.2 L114,30.2 L114,20.8" fill="none" stroke="#484848" stroke-width="0.9"/>
<path d="M107.6,24.2 L111.8,24.2 L109.7,26.8 Z" fill="#111"/>
<g transform="translate(0,-0.7)">
<path d="M6.6,24.8 C6.6,21.4 11,21.4 11,24.8 C11,26.6 9.8,27 9.8,28.6 L7.8,28.6 C7.8,27 6.6,26.6 6.6,24.8 Z" fill="#fdfbd0" stroke="#8a8a6a" stroke-width="0.6"/><rect x="7.8" y="28.8" width="2" height="1.6" fill="#777"/>
<circle cx="18.6" cy="26.2" r="3.2" fill="#f3ee38" stroke="#9a9640" stroke-width="0.7"/>
<circle cx="27" cy="25.4" r="2.8" fill="#f3ee38" stroke="#9a9640" stroke-width="0.6"/><rect x="27.6" y="25.6" width="4" height="4.4" fill="#fafafa" stroke="#555" stroke-width="0.6"/>
<path d="M34.6,22.6 C34.6,21 37.2,21 37.2,22.6 L37.2,23.6" fill="none" stroke="#8a8a4a" stroke-width="0.8"/><rect x="36" y="23.8" width="4.8" height="5.8" rx="0.6" fill="#f0ea48" stroke="#9a9640" stroke-width="0.6"/>
<rect x="42.2" y="23.6" width="5" height="5" fill="#5c5c5c" stroke="#222" stroke-width="0.6"/>
</g>
</svg>
<!-- Window panel -->
<svg class="abs" style="left:467px;top:30px" width="68" height="36" viewBox="0 0 68 36">
<path d="M17,6.8 L20.4,6.8 L20.4,15.4 L17,15.4 Z" fill="#c9c9c9" stroke="#777" stroke-width="0.7"/><path d="M19.6,5.6 L24,5.6 L26.4,8 L26.4,14.6 L19.6,14.6 Z" fill="#fbfbfb" stroke="#6e6e6e" stroke-width="0.8"/><path d="M24,5.6 L24,8 L26.4,8" fill="none" stroke="#6e6e6e" stroke-width="0.7"/>
<path d="M33.6,20.6 L37.2,20.6 L35.4,22.8 Z" fill="#111"/>
<g fill="#fafafa" stroke="#4e5868" stroke-width="0.9">
<rect x="43.2" y="5.6" width="8.4" height="3.6"/><rect x="43.2" y="10" width="8.4" height="3.6"/>
<rect x="55.2" y="5.6" width="3.4" height="8.2"/><rect x="59.6" y="5.6" width="3.4" height="8.2"/>
<rect x="43" y="21.4" width="6" height="4.2"/><rect x="44.4" y="23" width="6" height="4.2"/><rect x="45.8" y="24.6" width="6.2" height="4.6"/>
<rect x="55" y="21.4" width="3.4" height="3.2"/><rect x="59.6" y="21.4" width="3.4" height="3.2"/><rect x="55" y="25.8" width="3.4" height="3.2"/><rect x="59.6" y="25.8" width="3.4" height="3.2"/>
</g>
</svg>

<!-- ======= layout tab bar ======= -->
<div class="b" style="left:2px;top:522.7px;width:795px;height:11.6px;background:#d7d3cb;border-top:2px solid #8c8c8c"></div>
<div class="b" style="left:2px;top:523.5px;width:2.5px;height:60px;background:#6e6e6e"></div>
<svg class="abs" style="left:4px;top:523px" width="100" height="12" viewBox="0 0 100 12">
<g fill="#d8d4cc" stroke="#a4a098" stroke-width="0.6"><rect x="1.6" y="2" width="7.6" height="8.6"/><rect x="9.8" y="2" width="7.6" height="8.6"/><rect x="18" y="2" width="7.6" height="8.6"/><rect x="26.2" y="2" width="7.6" height="8.6"/></g>
<g fill="#8c8c8c"><path d="M4,4.2 h1 v4.4 h-1z M7.8,4.2 L7.8,8.6 L5.2,6.4Z"/><path d="M15,4.2 L15,8.6 L12.2,6.4Z"/><path d="M20.6,4.2 L20.6,8.6 L23.4,6.4Z"/><path d="M28.2,4.2 L28.2,8.6 L30.8,6.4Z M31,4.2 h1 v4.4 h-1z"/></g>
<path d="M34.6,1.4 L37.6,10.6 L60.4,10.6 L63.2,1.4" fill="#d5d1c9" stroke="#4a4a4a" stroke-width="0.8"/>
<path d="M61,1 L64.4,10.8 L92.4,10.8 L96.2,1 Z" fill="#ffffff" stroke="#3a3a3a" stroke-width="0.8"/>
<path d="M61.6,0.9 L95.8,0.9" stroke="#fff" stroke-width="1.2"/>
</svg>
<!-- ======= command line ======= -->
<div class="b" style="left:2px;top:534px;width:795px;height:2.6px;background:linear-gradient(#a09e98,#606060 50%,#565656)"></div>
<div class="b" style="left:4.5px;top:536.5px;width:792px;height:31.5px;background:#fff"></div>
<div class="b" style="left:4.5px;top:536.5px;width:7px;height:31.5px;background:#b9b9b9"></div>
<div class="b" style="left:5px;top:537.6px;width:6px;height:1.6px;background:#6a6a6a"></div>
<div class="b" style="left:11.5px;top:556.8px;width:740px;height:1px;background:#b0b0b0"></div>
<!-- scrollbars -->
<div class="b" style="left:787.5px;top:536.5px;width:9px;height:21px;background:#e9e7e2"></div>
<div class="b sb" style="left:787.5px;top:536.8px;width:9px;height:9.6px"></div>
<div class="b sb" style="left:787.5px;top:547px;width:9px;height:10px"></div>
<div class="b" style="left:751px;top:557.6px;width:36.5px;height:10.4px;background:#e9e7e2"></div>
<div class="b sb" style="left:751px;top:557.6px;width:9.6px;height:10.4px"></div>
<div class="b sb" style="left:760.8px;top:557.6px;width:8.4px;height:10.4px"></div>
<div class="b sb" style="left:777.6px;top:557.6px;width:9.8px;height:10.4px"></div>
<div class="b" style="left:787.5px;top:557.6px;width:9px;height:10.4px;background:#d4d0c8"></div>
<svg class="abs" style="left:750px;top:536px" width="48" height="33" viewBox="0 0 48 33">
<path d="M40,6.8 L44,6.8 L42,4.4Z M40,14.8 L44,14.8 L42,17.2Z M6.8,24.6 L6.8,29 L4.4,26.8Z M31.4,24.6 L31.4,29 L33.8,26.8Z" fill="#000"/>
</svg>
<!-- ======= status bar ======= -->
<div class="b" style="left:2px;top:567.8px;width:795px;height:14.9px;background:linear-gradient(#565656 0,#5a5a5a 1.1px,#9a9a9a 1.6px,#8f8f8f 5px,#7a7c7c 12.4px,#50504a 13.2px,#50504a 14.9px)"></div>
<div class="b sti" style="left:706px;width:11.5px"></div>
<div class="b sti" style="left:719px;width:11.5px"></div>
<div class="b sti" style="left:731.5px;width:11.5px"></div>
<div class="b sti" style="left:744px;width:11.5px"></div>
<div class="b sti" style="left:762.5px;width:12.5px"></div>
<div class="b sti" style="left:775px;width:12.5px"></div>
<svg class="abs" style="left:704px;top:568px" width="94" height="15" viewBox="0 0 94 15">
<path d="M5,8.4 C5,5.8 8,5 9.6,6.6 L11.4,9.4 C11.4,11.4 8,12 6.4,10.8 Z" fill="#f0f0f0" stroke="#555" stroke-width="0.6"/><path d="M11,3.2 L12.4,4.6 L11,6 L9.6,4.6Z" fill="#222"/>
<circle cx="19.8" cy="6.8" r="3" fill="#f8fafc" stroke="#444" stroke-width="0.9"/><path d="M22,9.2 L24.6,12" stroke="#333" stroke-width="1.4"/>
<rect x="30.4" y="4.4" width="6.4" height="6.6" rx="1" fill="none" stroke="#efefef" stroke-width="1.1"/><rect x="32.4" y="6.4" width="2.4" height="2.6" fill="#efefef"/>
<rect x="42" y="6.4" width="7.6" height="5" fill="#f4f4f4" stroke="#555" stroke-width="0.5"/><rect x="44.6" y="8" width="2.4" height="2" fill="#333"/><rect x="42.4" y="3.4" width="2" height="2" fill="#f4f4f4"/><rect x="46.8" y="3.4" width="2" height="2" fill="#f4f4f4"/>
<path d="M60.6,11 L65,6.4 C65,4.4 67.4,3.6 69,4.6 L67.4,6.2 L68.4,7.4 L70,6 C70.4,8 68.6,9 67,8.6 L62.4,12.6 Z" fill="#e8eef4" stroke="#5a6a7a" stroke-width="0.5"/>
<rect x="73.8" y="4" width="7" height="5" fill="#dff0e4" stroke="#5a7a6a" stroke-width="0.6"/><rect x="75.4" y="7" width="7" height="5" fill="#cfe8d8" stroke="#4a6a5a" stroke-width="0.6"/><path d="M76,10 L78.4,12 L81.4,8.4" stroke="#2e9a3e" stroke-width="1.1" fill="none"/>
<g fill="#c8c8c8"><rect x="90.4" y="8" width="1.6" height="1.6"/><rect x="90.4" y="10.6" width="1.6" height="1.6"/><rect x="87.8" y="10.6" width="1.6" height="1.6"/><rect x="85.2" y="10.6" width="1.6" height="1.6"/><rect x="87.8" y="8" width="1.6" height="1.6"/><rect x="90.4" y="5.4" width="1.6" height="1.6"/></g>
</svg>
<div class="b" style="left:797px;top:523.5px;width:3px;height:60px;background:#1a1a1a"></div>
<div class="b" style="left:796px;top:523.5px;width:1.2px;height:60px;background:#8a8a8a"></div>

<!-- ======= taskbar ======= -->
<div class="b" id="taskbar" style="left:0;top:582.7px;width:800px;height:17.3px;background:linear-gradient(#eceae4 0,#dedbd4 2px,#d4d0c8 5px)"></div>
<div class="b raised" style="left:2px;top:585px;width:28.5px;height:12.5px"></div>
<svg class="abs" style="left:3px;top:586px" width="10" height="11" viewBox="0 0 10 11">
<path d="M1.6,2.6 C2.8,1.8 3.8,1.8 4.8,2.4 L4.2,5 C3.2,4.4 2.2,4.4 1,5.2 Z" fill="#e2502a"/><path d="M5.2,2.6 C6.2,3.2 7.2,3.2 8.6,2.4 L8,5 C6.8,5.8 5.8,5.8 4.6,5.2 Z" fill="#56a83a"/>
<path d="M0.9,5.8 C2.1,5 3.1,5 4.1,5.6 L3.5,8.2 C2.5,7.6 1.5,7.6 0.3,8.4 Z" fill="#3c68d6"/><path d="M4.5,5.8 C5.5,6.4 6.5,6.4 7.9,5.6 L7.3,8.2 C6.1,9 5.1,9 3.9,8.4 Z" fill="#ecc42a"/>
</svg>
<!-- quick launch -->
<svg class="abs" style="left:32px;top:584px" width="94" height="15" viewBox="0 0 94 15">
<circle cx="7.4" cy="7.6" r="4.4" fill="#f6cf6a" stroke="#d8a84a" stroke-width="0.7"/><path d="M5.4,7.4 L7.4,9.4 L9.4,7.4" stroke="#fff7dc" stroke-width="1.2" fill="none"/>
<circle cx="21.2" cy="7.8" r="4.2" fill="#3b8fd8"/><ellipse cx="21.2" cy="7" rx="5.6" ry="1.8" fill="none" stroke="#8fd0f4" stroke-width="1" transform="rotate(-24 21.2 7)"/><path d="M18.8,8 L23.6,8" stroke="#dff2ff" stroke-width="1.3"/>
<circle cx="33.6" cy="7.8" r="4.4" fill="#2f7a3a"/><path d="M30,6.8 L34,4.6 L37.4,6.4 L33.6,8.4 Z" fill="#cfe8f8"/><path d="M30.4,9.6 L36.8,9.6" stroke="#9fd49a" stroke-width="1.4"/>
<rect x="42.4" y="3.6" width="8.4" height="8.8" rx="1.6" fill="#5aa0e2" stroke="#3a78c0" stroke-width="0.7"/><rect x="44.4" y="5.2" width="4.6" height="5.6" fill="#e8f3fc"/>
<path d="M59.6,4.2 C61.6,4.6 63.4,7.4 63,10 C62.6,12.4 58,12.8 56.6,10.6 C55.4,8.6 57.2,5.4 59.6,4.2 Z" fill="#c9c418" stroke="#3a3a10" stroke-width="0.8"/><path d="M59.4,2.6 L60.4,4.8" stroke="#222" stroke-width="1.2"/>
<circle cx="72.8" cy="7.8" r="4.4" fill="#2f84d0"/><path d="M69.4,6.8 C71.4,4.8 74.6,6 72.8,7.8 C71,9.6 74.4,10.6 76.2,8.8" stroke="#d8efff" stroke-width="1.3" fill="none"/>
<circle cx="85.6" cy="7.6" r="4.4" fill="#e8782a"/><circle cx="85.2" cy="7.4" r="2.5" fill="#3a4fa8"/><path d="M82.2,5.4 C83.6,3.2 87.8,3 89.4,5.8" stroke="#f4b23a" stroke-width="1.3" fill="none"/>
</svg>
<!-- task button -->
<div class="b" style="left:135.5px;top:585px;width:89.5px;height:12.5px;background:#f1efeb;border:1px solid;border-color:#404040 #fff #fff #404040;box-shadow:inset 1px 1px 0 #808080"></div>
<svg class="abs" style="left:138px;top:586px" width="10" height="11" viewBox="0 0 10 11">
<rect x="0.6" y="0.4" width="8.4" height="10.2" fill="#fbfbfb" stroke="#b4b4b4" stroke-width="0.5"/><path d="M2.4,1.4 L7.2,1.4 L7.2,2.6 L5.4,2.6 L5.4,6.2 L4.2,6.2 L4.2,2.6 L2.4,2.6 Z" fill="#d2262e"/><rect x="1.2" y="7" width="7.2" height="3" fill="#a62a2a"/>
</svg>
<!-- search desktop -->
<div class="b" style="left:415.5px;top:585px;width:83.5px;height:12.5px;background:#fff;border:1px solid #b8b4ac"></div>
<svg class="abs" style="left:499px;top:584px" width="102" height="15" viewBox="0 0 102 15">
<circle cx="7.4" cy="6.2" r="2.5" fill="#eaf4ff" stroke="#3a78d0" stroke-width="1.1"/><path d="M5.6,8.2 L3.6,10.6" stroke="#3a78d0" stroke-width="1.4"/>
<rect x="23.6" y="3.6" width="7.4" height="8.2" rx="0.8" fill="#fbfbf4" stroke="#333" stroke-width="0.9"/>
<path d="M38.8,4.6 L41.8,3.2 L42.4,4.8 L39.6,6.4 Z" fill="#444"/><rect x="39.6" y="9.6" width="1.8" height="1.6" fill="#222"/>
<rect x="51.6" y="3.6" width="27" height="8.8" rx="1" fill="#5ce05a" stroke="#2a8a2e" stroke-width="0.8"/><rect x="78.8" y="6" width="1.6" height="4" fill="#6a6a6a"/>
<path d="M85,6.4 L87,6.4 L87,4.6 L91.2,4.6 L91.2,5.8 L93.6,5.8 M91.2,10 L93.6,10 M85,9.6 L87,9.6 L87,11.4 L91.2,11.4 L91.2,4.6" stroke="#111" stroke-width="1.2" fill="#111"/>
</svg>
<span class="t" style="left:524.6px;top:588px;font:700 7px/8px 'Liberation Sans',sans-serif;color:#222">?</span>
<!-- tray -->
<div class="b" style="left:599px;top:584.5px;width:199px;height:14px;border:1px solid;border-color:#8a867e #fff #fff #8a867e"></div>
<svg class="abs" style="left:599px;top:584px" width="168" height="15" viewBox="0 0 168 15">
<path d="M6.6,4 C8.4,4.4 10,7 9.6,9.6 C9.2,11.8 5,12.2 3.8,10.2 C2.8,8.4 4.4,5 6.6,4 Z" fill="#c9c418" stroke="#3a3a10" stroke-width="0.8"/><path d="M6.4,2.4 L7.2,4.4" stroke="#222" stroke-width="1.1"/>
<circle cx="16.6" cy="7.8" r="4.2" fill="#2f84d0"/><path d="M13.6,6.8 C15.4,5 18.4,6.2 16.6,7.8 C15,9.4 18,10.4 19.6,8.8" stroke="#d8efff" stroke-width="1.2" fill="none"/>
<circle cx="26.4" cy="7.8" r="4.3" fill="#6ed04a"/><path d="M24.4,6 C25,8.2 26.6,9.6 28.6,10" stroke="#eaffdc" stroke-width="1.4" fill="none"/>
<circle cx="36" cy="5.4" r="1.8" fill="#2a8ad8"/><circle cx="39.2" cy="9.4" r="2" fill="#e84a2a"/><circle cx="34.6" cy="10" r="1.8" fill="#3a9a3a"/><path d="M36,5.4 L39.2,9.4 L34.6,10 Z" stroke="#444" stroke-width="0.6" fill="none"/>
<circle cx="48.8" cy="6.4" r="2.6" fill="#cfe4fa" stroke="#4a78c0" stroke-width="1"/><path d="M46.8,8.6 L44.4,11.4" stroke="#4a68a8" stroke-width="1.5"/>
<rect x="54.4" y="4" width="7.6" height="8" fill="#c8c8c8" stroke="#6a6a6a" stroke-width="0.7"/><circle cx="59.6" cy="10" r="2.4" fill="#f4f4f4" stroke="#2a8a3a" stroke-width="0.9"/>
<circle cx="68" cy="7.8" r="4.3" fill="#2a6ad8"/><circle cx="68" cy="7.8" r="2.2" fill="#eaf2ff"/><path d="M68,7.8 L70.6,6.4" stroke="#2a6ad8" stroke-width="1"/>
<circle cx="77.6" cy="8" r="4.3" fill="#f0cc48" stroke="#c09a28" stroke-width="0.6"/><path d="M77.6,3.6 C79.4,2.8 81,3.8 80.6,5.4" stroke="#8a6a1a" stroke-width="1" fill="none"/>
<rect x="83.6" y="3.4" width="9" height="9" fill="#1e7a2e"/><rect x="84.8" y="4.6" width="6.6" height="4" fill="#f4f4f4"/><rect x="87.4" y="9.4" width="3.6" height="2.4" fill="#0a3a14"/>
<rect x="94.6" y="3.2" width="7" height="5.2" fill="#2a7a4a" stroke="#1a3a2a" stroke-width="0.7"/><rect x="93.6" y="9" width="9" height="3" fill="#1a1a1a"/>
<path d="M105.2,10.8 L110,4.2 L112.6,6.2 L107.8,12.6 Z" fill="#d8cc28" stroke="#4a4a10" stroke-width="0.7"/>
<rect x="114.6" y="4.4" width="5.6" height="4.4" fill="#3a4a9a" stroke="#22285a" stroke-width="0.6"/><rect x="116.4" y="9" width="4.6" height="2.6" fill="#8a8a9a"/><path d="M121.4,3.6 C122.6,4.8 122.6,6.8 121.4,8" stroke="#666" stroke-width="0.7" fill="none"/>
<rect x="124.4" y="4" width="5.4" height="4.4" fill="#3a4aa8" stroke="#22285a" stroke-width="0.6"/><rect x="127.6" y="6.6" width="5" height="4" fill="#4a5ab8" stroke="#22285a" stroke-width="0.6"/><path d="M128.4,9.4 L132.4,13 M132.4,9.4 L128.4,13" stroke="#e0202a" stroke-width="1.3"/>
<circle cx="139.4" cy="7.8" r="3.9" fill="#6a6a6a" stroke="#3a3a3a" stroke-width="0.7"/><circle cx="139.4" cy="7.8" r="1.6" fill="#b8b8b8"/>
<rect x="146" y="3.4" width="5.6" height="4.6" fill="#4aa84a" stroke="#2a5a2a" stroke-width="0.6"/><path d="M144.8,10 L153.6,10 L152.4,12.4 L146,12.4 Z" fill="#8a8a8a" stroke="#444" stroke-width="0.5"/>
<circle cx="159.4" cy="7.8" r="4.2" fill="#f8f0f0" stroke="#e0403a" stroke-width="1.4"/><path d="M157.4,7.8 L161.4,7.8 M159.4,5.8 L159.4,9.8" stroke="#e0403a" stroke-width="1.6"/>
</svg>

<!-- ======= text ======= -->
<div id="labels" style="position:absolute;left:0;top:0;width:800px;height:600px;will-change:transform">
<span class="t" style="left:333.0px;top:4.8px;font:400 7px/8.05px 'Liberation Sans', sans-serif;color:#d2d2d2;transform:scaleX(0.984)">DWG TrueView 2009</span>
<span class="t" style="left:399.6px;top:4.8px;font:700 7px/8.05px 'Liberation Sans', sans-serif;color:#ffffff;transform:scaleX(0.930)">helicoool.dwg</span>
<span class="t" style="left:34.5px;top:18.8px;font:400 7px/8.05px 'Liberation Sans', sans-serif;color:#1a1a1a;transform:scaleX(0.859)">Standard</span>
<span class="t" style="left:76.7px;top:18.8px;font:400 7px/8.05px 'Liberation Sans', sans-serif;color:#ffffff;transform:scaleX(0.914)">Inquiry</span>
<span class="t" style="left:9.4px;top:45.4px;font:400 7px/8.05px 'Liberation Sans', sans-serif;color:#3a3a3a;transform:scaleX(0.902)">Open...</span>
<span class="t" style="left:36.1px;top:54.3px;font:400 7px/8.05px 'Liberation Sans', sans-serif;color:#3a3a3a;transform:scaleX(0.873)">DWG Convert...</span>
<span class="t" style="left:91.9px;top:54.3px;font:400 7px/8.05px 'Liberation Sans', sans-serif;color:#3a3a3a;transform:scaleX(0.860)">Plot...</span>
<span class="t" style="left:39.8px;top:66.7px;font:400 7px/8.05px 'Liberation Sans', sans-serif;color:#4a4a4a;transform:scaleX(0.805)">Files</span>
<span class="t" style="left:97.0px;top:66.7px;font:400 7px/8.05px 'Liberation Sans', sans-serif;color:#4a4a4a;transform:scaleX(0.904)">Output</span>
<span class="t" style="left:131.2px;top:54.3px;font:400 7px/8.05px 'Liberation Sans', sans-serif;color:#3a3a3a;transform:scaleX(0.865)">Realtime</span>
<span class="t" style="left:161.1px;top:54.3px;font:400 7px/8.05px 'Liberation Sans', sans-serif;color:#3a3a3a;transform:scaleX(0.858)">Realtime</span>
<span class="t" style="left:162.0px;top:66.7px;font:400 7px/8.05px 'Liberation Sans', sans-serif;color:#4a4a4a;transform:scaleX(0.874)">Navigation</span>
<span class="t" style="left:283.2px;top:37.7px;font:400 7px/8.05px 'Liberation Sans', sans-serif;color:#1a1a1a;transform:scaleX(0.876)">2D Wireframe</span>
<span class="t" style="left:281.6px;top:66.7px;font:400 7px/8.05px 'Liberation Sans', sans-serif;color:#4a4a4a;transform:scaleX(0.864)">View</span>
<span class="t" style="left:400.3px;top:51.4px;font:400 7px/8.05px 'Liberation Sans', sans-serif;color:#1a1a1a;transform:scaleX(0.796)">0</span>
<span class="t" style="left:399.0px;top:66.7px;font:400 7px/8.05px 'Liberation Sans', sans-serif;color:#4a4a4a;transform:scaleX(0.857)">Layers</span>
<span class="t" style="left:479.0px;top:45.4px;font:400 7px/8.05px 'Liberation Sans', sans-serif;color:#3a3a3a;transform:scaleX(0.788)">Open</span>
<span class="t" style="left:473.0px;top:52.4px;font:400 7px/8.05px 'Liberation Sans', sans-serif;color:#3a3a3a;transform:scaleX(0.881)">Drawings</span>
<span class="t" style="left:490.0px;top:66.7px;font:400 7px/8.05px 'Liberation Sans', sans-serif;color:#4a4a4a;transform:scaleX(0.872)">Window</span>
<span class="t" style="left:45.7px;top:525.3px;font:400 7px/8.05px 'Liberation Sans', sans-serif;color:#1a1a1a;transform:scaleX(0.865)">Model</span>
<span class="t" style="left:72.3px;top:525.3px;font:400 7px/8.05px 'Liberation Sans', sans-serif;color:#1a1a1a;transform:scaleX(0.843)">Layout1</span>
<span class="t" style="left:18.6px;top:537.9px;font:400 7.5px/8.62px 'Liberation Mono', monospace;color:#222;transform:scaleX(1.004)">&lt;Switching to: Layout1&gt;</span>
<span class="t" style="left:13.0px;top:546.9px;font:400 7.5px/8.62px 'Liberation Mono', monospace;color:#222;transform:scaleX(1.008)">Regenerating layout.</span>
<span class="t" style="left:10.5px;top:571.5px;font:400 7px/8.05px 'Liberation Sans', sans-serif;color:#1e1e1e;transform:scaleX(0.883)">13.0148, 1.9722, 0.0000</span>
<span class="t" style="left:13.3px;top:587.0px;font:700 7.5px/8.62px 'Liberation Sans', sans-serif;color:#111;transform:scaleX(0.889)">Start</span>
<span class="t" style="left:149.0px;top:587.4px;font:700 7.2px/8.28px 'Liberation Sans', sans-serif;color:#111;transform:scaleX(0.935)">DWG TrueView 2009 -...</span>
<span class="t" style="left:418.8px;top:587.6px;font:400 7px/8.05px 'Liberation Sans', sans-serif;color:#9a9a9a;transform:scaleX(0.878)">Search Desktop</span>
<span class="t" style="left:554.5px;top:588.0px;font:700 7px/8.05px 'Liberation Sans', sans-serif;color:#0a3a0a;transform:scaleX(1.075)">100%</span>
<span class="t" style="left:768.0px;top:588.2px;font:400 7px/8.05px 'Liberation Sans', sans-serif;color:#111;transform:scaleX(0.859)">10:30 AM</span>
</div>
</body>
</html>
